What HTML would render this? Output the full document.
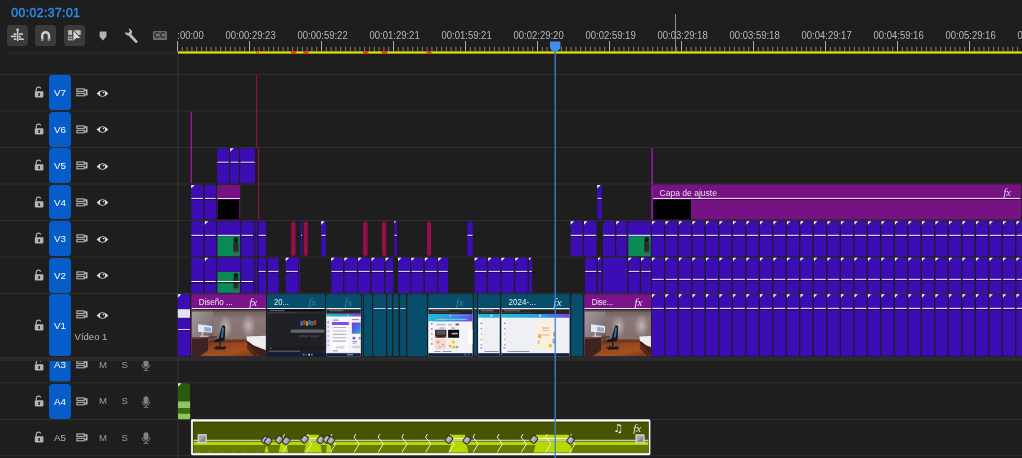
<!DOCTYPE html>
<html lang="es"><head><meta charset="utf-8"><title>Línea de tiempo</title>
<style>
html,body{margin:0;padding:0;background:#1e1e1e;}
body{width:1022px;height:458px;position:relative;overflow:hidden;font-family:"Liberation Sans",sans-serif;}
#app{position:absolute;left:0;top:0;width:1022px;height:458px;will-change:transform;}
.ab{position:absolute;}
.tc{position:absolute;left:11.3px;top:6px;font-size:12.2px;line-height:15px;font-weight:normal;-webkit-text-stroke:0.45px #2d8ceb;color:#2d8ceb;letter-spacing:0.42px;}
.btn{position:absolute;top:25px;width:21px;height:21px;border-radius:3.5px;background:#3b3b3b;}
.btn svg{display:block}
.cc{position:absolute;left:152.5px;top:31.4px;width:14.6px;height:9px;border-radius:1.6px;background:#6c6c6c;color:#1e1e1e;font-size:8.6px;font-weight:bold;line-height:9.6px;text-align:center;letter-spacing:-0.3px;}
.tb{position:absolute;left:49.4px;width:21.2px;border-radius:3.5px;background:#065cc8;color:#fff;font-size:9.8px;text-align:center;}
.tb.nb{background:transparent;color:#b8b8b8;}
.vn{position:absolute;left:74.6px;top:330.9px;font-size:9.5px;line-height:12px;color:#b8b8b8;}
.ms{position:absolute;font-size:9.6px;line-height:12px;color:#9c9c9c;width:8px;text-align:center;}
#cover{position:absolute;left:0;top:357px;width:177px;height:4px;background:#2b2b2b;}
</style></head><body>
<div id="app">
<svg id="tl" width="1022" height="458" viewBox="0 0 1022 458" style="position:absolute;left:0;top:0">
<rect x="7.00" y="52.30" width="171.00" height="1.30" fill="#2b2b2b"/>
<rect x="0.00" y="74.00" width="1022.00" height="1.00" fill="#2f2f2f"/>
<rect x="0.00" y="110.40" width="1022.00" height="1.00" fill="#2f2f2f"/>
<rect x="0.00" y="147.00" width="1022.00" height="1.00" fill="#2f2f2f"/>
<rect x="0.00" y="183.50" width="1022.00" height="1.00" fill="#2f2f2f"/>
<rect x="0.00" y="220.00" width="1022.00" height="1.00" fill="#2f2f2f"/>
<rect x="0.00" y="256.60" width="1022.00" height="1.00" fill="#2f2f2f"/>
<rect x="0.00" y="293.00" width="1022.00" height="1.00" fill="#2f2f2f"/>
<rect x="0.00" y="356.80" width="1022.00" height="4.20" fill="#2b2b2b"/>
<rect x="0.00" y="382.20" width="1022.00" height="1.00" fill="#2f2f2f"/>
<rect x="0.00" y="419.00" width="1022.00" height="1.00" fill="#2f2f2f"/>
<rect x="0.00" y="455.20" width="1022.00" height="1.00" fill="#2f2f2f"/>
<rect x="177.50" y="41.00" width="1.00" height="417.00" fill="#343434"/>
<rect x="256.00" y="75.00" width="1.20" height="72.50" fill="#8a1240"/>
<rect x="258.00" y="148.00" width="1.20" height="71.50" fill="#8a1240"/>
<rect x="190.50" y="111.50" width="1.60" height="71.50" fill="#8a1a9a"/>
<rect x="651.30" y="148.00" width="1.70" height="36.00" fill="#8a1a9a"/>
<rect x="217.10" y="148.20" width="11.90" height="35.10" fill="#3c0cb4" rx="1.5"/>
<rect x="217.40" y="161.70" width="11.30" height="1.2" fill="#d8d0ee"/>
<rect x="217.40" y="162.90" width="11.30" height="0.9" fill="#1a0a50"/>
<rect x="230.20" y="148.20" width="8.70" height="35.10" fill="#3c0cb4" rx="1.5"/>
<rect x="230.50" y="161.70" width="8.10" height="1.2" fill="#d8d0ee"/>
<rect x="230.50" y="162.90" width="8.10" height="0.9" fill="#1a0a50"/>
<path d="M230.20 148.20h3.5l-3.5 3.5z" fill="#f0f0f0"/>
<rect x="240.20" y="148.20" width="14.80" height="35.10" fill="#3c0cb4" rx="1.5"/>
<rect x="240.50" y="161.70" width="14.20" height="1.2" fill="#d8d0ee"/>
<rect x="240.50" y="162.90" width="14.20" height="0.9" fill="#1a0a50"/>
<rect x="191.20" y="185.00" width="12.20" height="34.60" fill="#3c0cb4" rx="1.5"/>
<rect x="191.50" y="197.90" width="11.60" height="1.2" fill="#d8d0ee"/>
<rect x="191.50" y="199.10" width="11.60" height="0.9" fill="#1a0a50"/>
<path d="M191.20 185.00h3.5l-3.5 3.5z" fill="#f0f0f0"/>
<rect x="204.80" y="185.00" width="11.10" height="34.60" fill="#3c0cb4" rx="1.5"/>
<rect x="205.10" y="197.90" width="10.50" height="1.2" fill="#d8d0ee"/>
<rect x="205.10" y="199.10" width="10.50" height="0.9" fill="#1a0a50"/>
<rect x="217.10" y="185.00" width="23.10" height="34.60" fill="#771285" rx="1.5"/>
<rect x="217.40" y="198.00" width="22.60" height="1.2" fill="#e8d8f0"/>
<rect x="217.40" y="199.20" width="22.60" height="0.9" fill="#300838"/>
<rect x="217.60" y="199.60" width="21.60" height="19.80" fill="#000"/>
<rect x="597.20" y="185.00" width="4.60" height="34.60" fill="#3c0cb4" rx="1.5"/>
<rect x="597.50" y="197.90" width="4.00" height="1.2" fill="#d8d0ee"/>
<rect x="597.50" y="199.10" width="4.00" height="0.9" fill="#1a0a50"/>
<path d="M597.20 185.00h3.5l-3.5 3.5z" fill="#f0f0f0"/>
<rect x="651.30" y="184.60" width="370.00" height="35.00" fill="#771285" rx="1.5"/>
<rect x="651.30" y="184.60" width="1.80" height="35.00" fill="#8a1a9a"/>
<rect x="653.20" y="197.90" width="367.00" height="1.10" fill="#e6d4ee"/>
<rect x="653.20" y="199.00" width="367.00" height="0.80" fill="#3a0840"/>
<rect x="653.20" y="199.70" width="37.80" height="19.80" fill="#000"/>
<text x="659.6" y="195.6" font-family="Liberation Sans, sans-serif" font-size="9.6" fill="#e8dcee" textLength="57.4" lengthAdjust="spacingAndGlyphs">Capa de ajuste</text>
<text x="1003.5" y="195.8" font-family="Liberation Serif, serif" font-style="italic" font-size="10" fill="#e8dcee">fx</text>
<rect x="191.20" y="221.20" width="12.40" height="35.10" fill="#3c0cb4" rx="1.5"/>
<rect x="191.50" y="234.80" width="11.80" height="1.2" fill="#d8d0ee"/>
<rect x="191.50" y="236.00" width="11.80" height="0.9" fill="#1a0a50"/>
<rect x="204.80" y="221.20" width="11.10" height="35.10" fill="#3c0cb4" rx="1.5"/>
<rect x="205.10" y="234.80" width="10.50" height="1.2" fill="#d8d0ee"/>
<rect x="205.10" y="236.00" width="10.50" height="0.9" fill="#1a0a50"/>
<path d="M204.80 221.20h3.5l-3.5 3.5z" fill="#f0f0f0"/>
<rect x="217.10" y="221.20" width="23.10" height="35.10" fill="#3c0cb4" rx="1.5"/>
<rect x="217.40" y="234.80" width="22.50" height="1.2" fill="#d8d0ee"/>
<rect x="217.40" y="236.00" width="22.50" height="0.9" fill="#1a0a50"/>
<rect x="217.60" y="236.20" width="22.20" height="20.00" fill="#0a8a56"/>
<ellipse cx="235.9" cy="239.7" rx="2.3" ry="2.6" fill="#141414"/>
<rect x="233.3" y="241.7" width="5.2" height="11.0" fill="#2a2a2c" rx="1"/>
<rect x="233.7" y="251.2" width="1.6" height="4.6" fill="#5a5a5e"/>
<rect x="236.5" y="251.2" width="1.6" height="4.6" fill="#5a5a5e"/>
<rect x="241.20" y="221.20" width="12.10" height="35.10" fill="#3c0cb4" rx="1.5"/>
<rect x="241.50" y="234.80" width="11.50" height="1.2" fill="#d8d0ee"/>
<rect x="241.50" y="236.00" width="11.50" height="0.9" fill="#1a0a50"/>
<rect x="254.10" y="221.20" width="1.20" height="35.10" fill="#3c0cb4" rx="0.5"/>
<rect x="255.90" y="221.20" width="1.10" height="35.10" fill="#3c0cb4" rx="0.5"/>
<rect x="258.40" y="221.20" width="7.70" height="35.10" fill="#3c0cb4" rx="1.5"/>
<rect x="258.70" y="234.80" width="7.10" height="1.2" fill="#d8d0ee"/>
<rect x="258.70" y="236.00" width="7.10" height="0.9" fill="#1a0a50"/>
<rect x="291.10" y="221.60" width="4.40" height="34.50" fill="#960f46" rx="2"/>
<rect x="303.70" y="221.60" width="4.00" height="34.50" fill="#960f46" rx="2"/>
<rect x="363.10" y="221.60" width="4.50" height="34.50" fill="#960f46" rx="2"/>
<rect x="382.00" y="221.60" width="4.20" height="34.50" fill="#960f46" rx="2"/>
<rect x="427.10" y="221.60" width="4.00" height="34.50" fill="#960f46" rx="2"/>
<rect x="300.70" y="221.20" width="1.50" height="35.10" fill="#3c0cb4" rx="0.5"/>
<rect x="301.00" y="234.80" width="0.90" height="1.2" fill="#d8d0ee"/>
<rect x="301.00" y="236.00" width="0.90" height="0.9" fill="#1a0a50"/>
<rect x="321.20" y="221.20" width="4.70" height="35.10" fill="#3c0cb4" rx="1.5"/>
<rect x="321.50" y="234.80" width="4.10" height="1.2" fill="#d8d0ee"/>
<rect x="321.50" y="236.00" width="4.10" height="0.9" fill="#1a0a50"/>
<path d="M321.20 221.20h3.5l-3.5 3.5z" fill="#f0f0f0"/>
<rect x="394.20" y="221.20" width="2.80" height="35.10" fill="#3c0cb4" rx="1"/>
<rect x="394.50" y="234.80" width="2.20" height="1.2" fill="#d8d0ee"/>
<rect x="394.50" y="236.00" width="2.20" height="0.9" fill="#1a0a50"/>
<path d="M394.20 221.20h2.0000000000000115l-2.0000000000000115 2.0000000000000115z" fill="#f0f0f0"/>
<rect x="467.20" y="221.20" width="5.60" height="35.10" fill="#3c0cb4" rx="2"/>
<rect x="467.50" y="234.80" width="5.00" height="1.2" fill="#d8d0ee"/>
<rect x="467.50" y="236.00" width="5.00" height="0.9" fill="#1a0a50"/>
<rect x="570.60" y="221.20" width="12.20" height="35.10" fill="#3c0cb4" rx="1.5"/>
<rect x="570.90" y="234.80" width="11.60" height="1.2" fill="#d8d0ee"/>
<rect x="570.90" y="236.00" width="11.60" height="0.9" fill="#1a0a50"/>
<path d="M570.60 221.20h3.5l-3.5 3.5z" fill="#f0f0f0"/>
<rect x="584.00" y="221.20" width="12.50" height="35.10" fill="#3c0cb4" rx="1.5"/>
<rect x="584.30" y="234.80" width="11.90" height="1.2" fill="#d8d0ee"/>
<rect x="584.30" y="236.00" width="11.90" height="0.9" fill="#1a0a50"/>
<path d="M584.00 221.20h3.5l-3.5 3.5z" fill="#f0f0f0"/>
<rect x="603.00" y="221.20" width="12.00" height="35.10" fill="#3c0cb4" rx="1.5"/>
<rect x="603.30" y="234.80" width="11.40" height="1.2" fill="#d8d0ee"/>
<rect x="603.30" y="236.00" width="11.40" height="0.9" fill="#1a0a50"/>
<rect x="616.20" y="221.20" width="10.60" height="35.10" fill="#3c0cb4" rx="1.5"/>
<rect x="616.50" y="234.80" width="10.00" height="1.2" fill="#d8d0ee"/>
<rect x="616.50" y="236.00" width="10.00" height="0.9" fill="#1a0a50"/>
<path d="M616.20 221.20h3.5l-3.5 3.5z" fill="#f0f0f0"/>
<rect x="628.00" y="221.20" width="23.00" height="35.10" fill="#3c0cb4" rx="1.5"/>
<rect x="628.30" y="234.80" width="22.40" height="1.2" fill="#d8d0ee"/>
<rect x="628.30" y="236.00" width="22.40" height="0.9" fill="#1a0a50"/>
<rect x="628.40" y="236.20" width="22.20" height="20.00" fill="#0a8a56"/>
<ellipse cx="646.7" cy="239.7" rx="2.3" ry="2.6" fill="#141414"/>
<rect x="644.1" y="241.7" width="5.2" height="11.0" fill="#2a2a2c" rx="1"/>
<rect x="644.5" y="251.2" width="1.6" height="4.6" fill="#5a5a5e"/>
<rect x="647.3" y="251.2" width="1.6" height="4.6" fill="#5a5a5e"/>
<rect x="191.20" y="257.80" width="12.40" height="35.10" fill="#3c0cb4" rx="1.5"/>
<rect x="204.80" y="257.80" width="11.10" height="35.10" fill="#3c0cb4" rx="1.5"/>
<path d="M204.80 257.80h3.5l-3.5 3.5z" fill="#f0f0f0"/>
<rect x="217.10" y="257.80" width="23.10" height="35.10" fill="#3c0cb4" rx="1.5"/>
<rect x="217.60" y="272.00" width="22.20" height="20.70" fill="#0a8a56"/>
<ellipse cx="235.9" cy="275.5" rx="2.3" ry="2.6" fill="#141414"/>
<rect x="233.3" y="277.5" width="5.2" height="11.7" fill="#2a2a2c" rx="1"/>
<rect x="233.7" y="287.7" width="1.6" height="4.6" fill="#5a5a5e"/>
<rect x="236.5" y="287.7" width="1.6" height="4.6" fill="#5a5a5e"/>
<rect x="241.20" y="257.80" width="12.10" height="35.10" fill="#3c0cb4" rx="1.5"/>
<rect x="191.50" y="281.00" width="11.80" height="1.2" fill="#ffffff"/>
<rect x="191.50" y="282.20" width="11.80" height="0.9" fill="#050505"/>
<rect x="205.10" y="281.00" width="10.50" height="1.2" fill="#ffffff"/>
<rect x="205.10" y="282.20" width="10.50" height="0.9" fill="#050505"/>
<rect x="217.40" y="281.00" width="22.60" height="1.2" fill="#ffffff"/>
<rect x="217.40" y="282.20" width="22.60" height="0.9" fill="#050505"/>
<rect x="241.50" y="281.00" width="11.50" height="1.2" fill="#ffffff"/>
<rect x="241.50" y="282.20" width="11.50" height="0.9" fill="#050505"/>
<rect x="254.10" y="257.80" width="1.20" height="35.10" fill="#3c0cb4" rx="0.5"/>
<rect x="255.90" y="257.80" width="1.10" height="35.10" fill="#3c0cb4" rx="0.5"/>
<rect x="258.40" y="257.80" width="7.70" height="35.10" fill="#3c0cb4" rx="1.5"/>
<rect x="258.70" y="270.90" width="7.10" height="1.2" fill="#d8d0ee"/>
<rect x="258.70" y="272.10" width="7.10" height="0.9" fill="#1a0a50"/>
<rect x="267.90" y="257.80" width="10.80" height="35.10" fill="#3c0cb4" rx="1.5"/>
<rect x="268.20" y="270.90" width="10.20" height="1.2" fill="#d8d0ee"/>
<rect x="268.20" y="272.10" width="10.20" height="0.9" fill="#1a0a50"/>
<rect x="285.70" y="257.80" width="12.40" height="35.10" fill="#3c0cb4" rx="1.5"/>
<rect x="286.00" y="270.90" width="11.80" height="1.2" fill="#d8d0ee"/>
<rect x="286.00" y="272.10" width="11.80" height="0.9" fill="#1a0a50"/>
<path d="M285.70 257.80h3.5l-3.5 3.5z" fill="#f0f0f0"/>
<rect x="299.00" y="257.80" width="1.00" height="35.10" fill="#3c0cb4" rx="0.5"/>
<rect x="331.20" y="257.80" width="11.90" height="35.10" fill="#3c0cb4" rx="1.5"/>
<rect x="331.50" y="270.90" width="11.30" height="1.2" fill="#d8d0ee"/>
<rect x="331.50" y="272.10" width="11.30" height="0.9" fill="#1a0a50"/>
<path d="M331.20 257.80h3.5l-3.5 3.5z" fill="#f0f0f0"/>
<rect x="344.40" y="257.80" width="12.60" height="35.10" fill="#3c0cb4" rx="1.5"/>
<rect x="344.70" y="270.90" width="12.00" height="1.2" fill="#d8d0ee"/>
<rect x="344.70" y="272.10" width="12.00" height="0.9" fill="#1a0a50"/>
<path d="M344.40 257.80h3.5l-3.5 3.5z" fill="#f0f0f0"/>
<rect x="358.10" y="257.80" width="12.00" height="35.10" fill="#3c0cb4" rx="1.5"/>
<rect x="358.40" y="270.90" width="11.40" height="1.2" fill="#d8d0ee"/>
<rect x="358.40" y="272.10" width="11.40" height="0.9" fill="#1a0a50"/>
<path d="M358.10 257.80h3.5l-3.5 3.5z" fill="#f0f0f0"/>
<rect x="371.50" y="257.80" width="12.70" height="35.10" fill="#3c0cb4" rx="1.5"/>
<rect x="371.80" y="270.90" width="12.10" height="1.2" fill="#d8d0ee"/>
<rect x="371.80" y="272.10" width="12.10" height="0.9" fill="#1a0a50"/>
<path d="M371.50 257.80h3.5l-3.5 3.5z" fill="#f0f0f0"/>
<rect x="385.50" y="257.80" width="7.80" height="35.10" fill="#3c0cb4" rx="1.5"/>
<rect x="385.80" y="270.90" width="7.20" height="1.2" fill="#d8d0ee"/>
<rect x="385.80" y="272.10" width="7.20" height="0.9" fill="#1a0a50"/>
<path d="M385.50 257.80h3.5l-3.5 3.5z" fill="#f0f0f0"/>
<rect x="398.00" y="257.80" width="12.30" height="35.10" fill="#3c0cb4" rx="1.5"/>
<rect x="398.30" y="270.90" width="11.70" height="1.2" fill="#d8d0ee"/>
<rect x="398.30" y="272.10" width="11.70" height="0.9" fill="#1a0a50"/>
<path d="M398.00 257.80h3.5l-3.5 3.5z" fill="#f0f0f0"/>
<rect x="411.30" y="257.80" width="12.10" height="35.10" fill="#3c0cb4" rx="1.5"/>
<rect x="411.60" y="270.90" width="11.50" height="1.2" fill="#d8d0ee"/>
<rect x="411.60" y="272.10" width="11.50" height="0.9" fill="#1a0a50"/>
<path d="M411.30 257.80h3.5l-3.5 3.5z" fill="#f0f0f0"/>
<rect x="424.80" y="257.80" width="12.20" height="35.10" fill="#3c0cb4" rx="1.5"/>
<rect x="425.10" y="270.90" width="11.60" height="1.2" fill="#d8d0ee"/>
<rect x="425.10" y="272.10" width="11.60" height="0.9" fill="#1a0a50"/>
<path d="M424.80 257.80h3.5l-3.5 3.5z" fill="#f0f0f0"/>
<rect x="438.20" y="257.80" width="9.80" height="35.10" fill="#3c0cb4" rx="1.5"/>
<rect x="438.50" y="270.90" width="9.20" height="1.2" fill="#d8d0ee"/>
<rect x="438.50" y="272.10" width="9.20" height="0.9" fill="#1a0a50"/>
<path d="M438.20 257.80h3.5l-3.5 3.5z" fill="#f0f0f0"/>
<rect x="474.60" y="257.80" width="12.20" height="35.10" fill="#3c0cb4" rx="1.5"/>
<rect x="474.90" y="270.90" width="11.60" height="1.2" fill="#d8d0ee"/>
<rect x="474.90" y="272.10" width="11.60" height="0.9" fill="#1a0a50"/>
<path d="M474.60 257.80h3.5l-3.5 3.5z" fill="#f0f0f0"/>
<rect x="488.20" y="257.80" width="12.10" height="35.10" fill="#3c0cb4" rx="1.5"/>
<rect x="488.50" y="270.90" width="11.50" height="1.2" fill="#d8d0ee"/>
<rect x="488.50" y="272.10" width="11.50" height="0.9" fill="#1a0a50"/>
<path d="M488.20 257.80h3.5l-3.5 3.5z" fill="#f0f0f0"/>
<rect x="501.40" y="257.80" width="12.50" height="35.10" fill="#3c0cb4" rx="1.5"/>
<rect x="501.70" y="270.90" width="11.90" height="1.2" fill="#d8d0ee"/>
<rect x="501.70" y="272.10" width="11.90" height="0.9" fill="#1a0a50"/>
<path d="M501.40 257.80h3.5l-3.5 3.5z" fill="#f0f0f0"/>
<rect x="515.30" y="257.80" width="12.30" height="35.10" fill="#3c0cb4" rx="1.5"/>
<rect x="515.60" y="270.90" width="11.70" height="1.2" fill="#d8d0ee"/>
<rect x="515.60" y="272.10" width="11.70" height="0.9" fill="#1a0a50"/>
<path d="M515.30 257.80h3.5l-3.5 3.5z" fill="#f0f0f0"/>
<rect x="528.90" y="257.80" width="3.30" height="35.10" fill="#3c0cb4" rx="1.5"/>
<rect x="529.20" y="270.90" width="2.70" height="1.2" fill="#d8d0ee"/>
<rect x="529.20" y="272.10" width="2.70" height="0.9" fill="#1a0a50"/>
<path d="M528.90 257.80h2.5000000000000684l-2.5000000000000684 2.5000000000000684z" fill="#f0f0f0"/>
<rect x="585.00" y="257.80" width="11.70" height="35.10" fill="#3c0cb4" rx="1.5"/>
<rect x="585.30" y="270.90" width="11.10" height="1.2" fill="#d8d0ee"/>
<rect x="585.30" y="272.10" width="11.10" height="0.9" fill="#1a0a50"/>
<rect x="598.00" y="257.80" width="3.50" height="35.10" fill="#3c0cb4" rx="1.5"/>
<rect x="598.30" y="270.90" width="2.90" height="1.2" fill="#d8d0ee"/>
<rect x="598.30" y="272.10" width="2.90" height="0.9" fill="#1a0a50"/>
<path d="M598.00 257.80h2.7l-2.7 2.7z" fill="#f0f0f0"/>
<rect x="603.00" y="257.80" width="24.00" height="35.10" fill="#3c0cb4" rx="1.5"/>
<rect x="628.40" y="257.80" width="11.30" height="35.10" fill="#3c0cb4" rx="1.5"/>
<rect x="628.70" y="270.90" width="10.70" height="1.2" fill="#d8d0ee"/>
<rect x="628.70" y="272.10" width="10.70" height="0.9" fill="#1a0a50"/>
<path d="M628.40 257.80h3.5l-3.5 3.5z" fill="#f0f0f0"/>
<rect x="641.00" y="257.80" width="10.00" height="35.10" fill="#3c0cb4" rx="1.5"/>
<rect x="641.30" y="270.90" width="9.40" height="1.2" fill="#d8d0ee"/>
<rect x="641.30" y="272.10" width="9.40" height="0.9" fill="#1a0a50"/>
<path d="M641.00 257.80h3.5l-3.5 3.5z" fill="#f0f0f0"/>
<rect x="651.90" y="221.20" width="12.20" height="35.10" fill="#3c0cb4" rx="1"/>
<rect x="652.20" y="234.80" width="11.60" height="1.2" fill="#d8d0ee"/>
<rect x="652.20" y="236.00" width="11.60" height="0.9" fill="#1a0a50"/>
<path d="M651.90 221.20h3.5l-3.5 3.5z" fill="#f0f0f0"/>
<rect x="651.90" y="257.80" width="12.20" height="35.10" fill="#3c0cb4" rx="1"/>
<rect x="652.20" y="278.80" width="11.60" height="1.2" fill="#d8d0ee"/>
<rect x="652.20" y="280.00" width="11.60" height="0.9" fill="#1a0a50"/>
<path d="M651.90 257.80h3.5l-3.5 3.5z" fill="#f0f0f0"/>
<rect x="651.90" y="294.20" width="12.20" height="62.10" fill="#3c0cb4" rx="1"/>
<rect x="652.20" y="307.80" width="11.60" height="1.2" fill="#d8d0ee"/>
<rect x="652.20" y="309.00" width="11.60" height="0.9" fill="#1a0a50"/>
<path d="M651.90 294.20h3.5l-3.5 3.5z" fill="#f0f0f0"/>
<rect x="665.40" y="221.20" width="12.20" height="35.10" fill="#3c0cb4" rx="1"/>
<rect x="665.70" y="234.80" width="11.60" height="1.2" fill="#d8d0ee"/>
<rect x="665.70" y="236.00" width="11.60" height="0.9" fill="#1a0a50"/>
<path d="M665.40 221.20h3.5l-3.5 3.5z" fill="#f0f0f0"/>
<rect x="665.40" y="257.80" width="12.20" height="35.10" fill="#3c0cb4" rx="1"/>
<rect x="665.70" y="278.80" width="11.60" height="1.2" fill="#d8d0ee"/>
<rect x="665.70" y="280.00" width="11.60" height="0.9" fill="#1a0a50"/>
<path d="M665.40 257.80h3.5l-3.5 3.5z" fill="#f0f0f0"/>
<rect x="665.40" y="294.20" width="12.20" height="62.10" fill="#3c0cb4" rx="1"/>
<rect x="665.70" y="307.80" width="11.60" height="1.2" fill="#d8d0ee"/>
<rect x="665.70" y="309.00" width="11.60" height="0.9" fill="#1a0a50"/>
<path d="M665.40 294.20h3.5l-3.5 3.5z" fill="#f0f0f0"/>
<rect x="678.90" y="221.20" width="12.20" height="35.10" fill="#3c0cb4" rx="1"/>
<rect x="679.20" y="234.80" width="11.60" height="1.2" fill="#d8d0ee"/>
<rect x="679.20" y="236.00" width="11.60" height="0.9" fill="#1a0a50"/>
<path d="M678.90 221.20h3.5l-3.5 3.5z" fill="#f0f0f0"/>
<rect x="678.90" y="257.80" width="12.20" height="35.10" fill="#3c0cb4" rx="1"/>
<rect x="679.20" y="278.80" width="11.60" height="1.2" fill="#d8d0ee"/>
<rect x="679.20" y="280.00" width="11.60" height="0.9" fill="#1a0a50"/>
<path d="M678.90 257.80h3.5l-3.5 3.5z" fill="#f0f0f0"/>
<rect x="678.90" y="294.20" width="12.20" height="62.10" fill="#3c0cb4" rx="1"/>
<rect x="679.20" y="307.80" width="11.60" height="1.2" fill="#d8d0ee"/>
<rect x="679.20" y="309.00" width="11.60" height="0.9" fill="#1a0a50"/>
<path d="M678.90 294.20h3.5l-3.5 3.5z" fill="#f0f0f0"/>
<rect x="692.40" y="221.20" width="12.20" height="35.10" fill="#3c0cb4" rx="1"/>
<rect x="692.70" y="234.80" width="11.60" height="1.2" fill="#d8d0ee"/>
<rect x="692.70" y="236.00" width="11.60" height="0.9" fill="#1a0a50"/>
<path d="M692.40 221.20h3.5l-3.5 3.5z" fill="#f0f0f0"/>
<rect x="692.40" y="257.80" width="12.20" height="35.10" fill="#3c0cb4" rx="1"/>
<rect x="692.70" y="278.80" width="11.60" height="1.2" fill="#d8d0ee"/>
<rect x="692.70" y="280.00" width="11.60" height="0.9" fill="#1a0a50"/>
<path d="M692.40 257.80h3.5l-3.5 3.5z" fill="#f0f0f0"/>
<rect x="692.40" y="294.20" width="12.20" height="62.10" fill="#3c0cb4" rx="1"/>
<rect x="692.70" y="307.80" width="11.60" height="1.2" fill="#d8d0ee"/>
<rect x="692.70" y="309.00" width="11.60" height="0.9" fill="#1a0a50"/>
<path d="M692.40 294.20h3.5l-3.5 3.5z" fill="#f0f0f0"/>
<rect x="705.90" y="221.20" width="12.20" height="35.10" fill="#3c0cb4" rx="1"/>
<rect x="706.20" y="234.80" width="11.60" height="1.2" fill="#d8d0ee"/>
<rect x="706.20" y="236.00" width="11.60" height="0.9" fill="#1a0a50"/>
<path d="M705.90 221.20h3.5l-3.5 3.5z" fill="#f0f0f0"/>
<rect x="705.90" y="257.80" width="12.20" height="35.10" fill="#3c0cb4" rx="1"/>
<rect x="706.20" y="278.80" width="11.60" height="1.2" fill="#d8d0ee"/>
<rect x="706.20" y="280.00" width="11.60" height="0.9" fill="#1a0a50"/>
<path d="M705.90 257.80h3.5l-3.5 3.5z" fill="#f0f0f0"/>
<rect x="705.90" y="294.20" width="12.20" height="62.10" fill="#3c0cb4" rx="1"/>
<rect x="706.20" y="307.80" width="11.60" height="1.2" fill="#d8d0ee"/>
<rect x="706.20" y="309.00" width="11.60" height="0.9" fill="#1a0a50"/>
<path d="M705.90 294.20h3.5l-3.5 3.5z" fill="#f0f0f0"/>
<rect x="719.40" y="221.20" width="12.20" height="35.10" fill="#3c0cb4" rx="1"/>
<rect x="719.70" y="234.80" width="11.60" height="1.2" fill="#d8d0ee"/>
<rect x="719.70" y="236.00" width="11.60" height="0.9" fill="#1a0a50"/>
<path d="M719.40 221.20h3.5l-3.5 3.5z" fill="#f0f0f0"/>
<rect x="719.40" y="257.80" width="12.20" height="35.10" fill="#3c0cb4" rx="1"/>
<rect x="719.70" y="278.80" width="11.60" height="1.2" fill="#d8d0ee"/>
<rect x="719.70" y="280.00" width="11.60" height="0.9" fill="#1a0a50"/>
<path d="M719.40 257.80h3.5l-3.5 3.5z" fill="#f0f0f0"/>
<rect x="719.40" y="294.20" width="12.20" height="62.10" fill="#3c0cb4" rx="1"/>
<rect x="719.70" y="307.80" width="11.60" height="1.2" fill="#d8d0ee"/>
<rect x="719.70" y="309.00" width="11.60" height="0.9" fill="#1a0a50"/>
<path d="M719.40 294.20h3.5l-3.5 3.5z" fill="#f0f0f0"/>
<rect x="732.90" y="221.20" width="12.20" height="35.10" fill="#3c0cb4" rx="1"/>
<rect x="733.20" y="234.80" width="11.60" height="1.2" fill="#d8d0ee"/>
<rect x="733.20" y="236.00" width="11.60" height="0.9" fill="#1a0a50"/>
<path d="M732.90 221.20h3.5l-3.5 3.5z" fill="#f0f0f0"/>
<rect x="732.90" y="257.80" width="12.20" height="35.10" fill="#3c0cb4" rx="1"/>
<rect x="733.20" y="278.80" width="11.60" height="1.2" fill="#d8d0ee"/>
<rect x="733.20" y="280.00" width="11.60" height="0.9" fill="#1a0a50"/>
<path d="M732.90 257.80h3.5l-3.5 3.5z" fill="#f0f0f0"/>
<rect x="732.90" y="294.20" width="12.20" height="62.10" fill="#3c0cb4" rx="1"/>
<rect x="733.20" y="307.80" width="11.60" height="1.2" fill="#d8d0ee"/>
<rect x="733.20" y="309.00" width="11.60" height="0.9" fill="#1a0a50"/>
<path d="M732.90 294.20h3.5l-3.5 3.5z" fill="#f0f0f0"/>
<rect x="746.40" y="221.20" width="12.20" height="35.10" fill="#3c0cb4" rx="1"/>
<rect x="746.70" y="234.80" width="11.60" height="1.2" fill="#d8d0ee"/>
<rect x="746.70" y="236.00" width="11.60" height="0.9" fill="#1a0a50"/>
<path d="M746.40 221.20h3.5l-3.5 3.5z" fill="#f0f0f0"/>
<rect x="746.40" y="257.80" width="12.20" height="35.10" fill="#3c0cb4" rx="1"/>
<rect x="746.70" y="278.80" width="11.60" height="1.2" fill="#d8d0ee"/>
<rect x="746.70" y="280.00" width="11.60" height="0.9" fill="#1a0a50"/>
<path d="M746.40 257.80h3.5l-3.5 3.5z" fill="#f0f0f0"/>
<rect x="746.40" y="294.20" width="12.20" height="62.10" fill="#3c0cb4" rx="1"/>
<rect x="746.70" y="307.80" width="11.60" height="1.2" fill="#d8d0ee"/>
<rect x="746.70" y="309.00" width="11.60" height="0.9" fill="#1a0a50"/>
<path d="M746.40 294.20h3.5l-3.5 3.5z" fill="#f0f0f0"/>
<rect x="759.90" y="221.20" width="12.20" height="35.10" fill="#3c0cb4" rx="1"/>
<rect x="760.20" y="234.80" width="11.60" height="1.2" fill="#d8d0ee"/>
<rect x="760.20" y="236.00" width="11.60" height="0.9" fill="#1a0a50"/>
<path d="M759.90 221.20h3.5l-3.5 3.5z" fill="#f0f0f0"/>
<rect x="759.90" y="257.80" width="12.20" height="35.10" fill="#3c0cb4" rx="1"/>
<rect x="760.20" y="278.80" width="11.60" height="1.2" fill="#d8d0ee"/>
<rect x="760.20" y="280.00" width="11.60" height="0.9" fill="#1a0a50"/>
<path d="M759.90 257.80h3.5l-3.5 3.5z" fill="#f0f0f0"/>
<rect x="759.90" y="294.20" width="12.20" height="62.10" fill="#3c0cb4" rx="1"/>
<rect x="760.20" y="307.80" width="11.60" height="1.2" fill="#d8d0ee"/>
<rect x="760.20" y="309.00" width="11.60" height="0.9" fill="#1a0a50"/>
<path d="M759.90 294.20h3.5l-3.5 3.5z" fill="#f0f0f0"/>
<rect x="773.40" y="221.20" width="12.20" height="35.10" fill="#3c0cb4" rx="1"/>
<rect x="773.70" y="234.80" width="11.60" height="1.2" fill="#d8d0ee"/>
<rect x="773.70" y="236.00" width="11.60" height="0.9" fill="#1a0a50"/>
<path d="M773.40 221.20h3.5l-3.5 3.5z" fill="#f0f0f0"/>
<rect x="773.40" y="257.80" width="12.20" height="35.10" fill="#3c0cb4" rx="1"/>
<rect x="773.70" y="278.80" width="11.60" height="1.2" fill="#d8d0ee"/>
<rect x="773.70" y="280.00" width="11.60" height="0.9" fill="#1a0a50"/>
<path d="M773.40 257.80h3.5l-3.5 3.5z" fill="#f0f0f0"/>
<rect x="773.40" y="294.20" width="12.20" height="62.10" fill="#3c0cb4" rx="1"/>
<rect x="773.70" y="307.80" width="11.60" height="1.2" fill="#d8d0ee"/>
<rect x="773.70" y="309.00" width="11.60" height="0.9" fill="#1a0a50"/>
<path d="M773.40 294.20h3.5l-3.5 3.5z" fill="#f0f0f0"/>
<rect x="786.90" y="221.20" width="12.20" height="35.10" fill="#3c0cb4" rx="1"/>
<rect x="787.20" y="234.80" width="11.60" height="1.2" fill="#d8d0ee"/>
<rect x="787.20" y="236.00" width="11.60" height="0.9" fill="#1a0a50"/>
<path d="M786.90 221.20h3.5l-3.5 3.5z" fill="#f0f0f0"/>
<rect x="786.90" y="257.80" width="12.20" height="35.10" fill="#3c0cb4" rx="1"/>
<rect x="787.20" y="278.80" width="11.60" height="1.2" fill="#d8d0ee"/>
<rect x="787.20" y="280.00" width="11.60" height="0.9" fill="#1a0a50"/>
<path d="M786.90 257.80h3.5l-3.5 3.5z" fill="#f0f0f0"/>
<rect x="786.90" y="294.20" width="12.20" height="62.10" fill="#3c0cb4" rx="1"/>
<rect x="787.20" y="307.80" width="11.60" height="1.2" fill="#d8d0ee"/>
<rect x="787.20" y="309.00" width="11.60" height="0.9" fill="#1a0a50"/>
<path d="M786.90 294.20h3.5l-3.5 3.5z" fill="#f0f0f0"/>
<rect x="800.40" y="221.20" width="12.20" height="35.10" fill="#3c0cb4" rx="1"/>
<rect x="800.70" y="234.80" width="11.60" height="1.2" fill="#d8d0ee"/>
<rect x="800.70" y="236.00" width="11.60" height="0.9" fill="#1a0a50"/>
<path d="M800.40 221.20h3.5l-3.5 3.5z" fill="#f0f0f0"/>
<rect x="800.40" y="257.80" width="12.20" height="35.10" fill="#3c0cb4" rx="1"/>
<rect x="800.70" y="278.80" width="11.60" height="1.2" fill="#d8d0ee"/>
<rect x="800.70" y="280.00" width="11.60" height="0.9" fill="#1a0a50"/>
<path d="M800.40 257.80h3.5l-3.5 3.5z" fill="#f0f0f0"/>
<rect x="800.40" y="294.20" width="12.20" height="62.10" fill="#3c0cb4" rx="1"/>
<rect x="800.70" y="307.80" width="11.60" height="1.2" fill="#d8d0ee"/>
<rect x="800.70" y="309.00" width="11.60" height="0.9" fill="#1a0a50"/>
<path d="M800.40 294.20h3.5l-3.5 3.5z" fill="#f0f0f0"/>
<rect x="813.90" y="221.20" width="12.20" height="35.10" fill="#3c0cb4" rx="1"/>
<rect x="814.20" y="234.80" width="11.60" height="1.2" fill="#d8d0ee"/>
<rect x="814.20" y="236.00" width="11.60" height="0.9" fill="#1a0a50"/>
<path d="M813.90 221.20h3.5l-3.5 3.5z" fill="#f0f0f0"/>
<rect x="813.90" y="257.80" width="12.20" height="35.10" fill="#3c0cb4" rx="1"/>
<rect x="814.20" y="278.80" width="11.60" height="1.2" fill="#d8d0ee"/>
<rect x="814.20" y="280.00" width="11.60" height="0.9" fill="#1a0a50"/>
<path d="M813.90 257.80h3.5l-3.5 3.5z" fill="#f0f0f0"/>
<rect x="813.90" y="294.20" width="12.20" height="62.10" fill="#3c0cb4" rx="1"/>
<rect x="814.20" y="307.80" width="11.60" height="1.2" fill="#d8d0ee"/>
<rect x="814.20" y="309.00" width="11.60" height="0.9" fill="#1a0a50"/>
<path d="M813.90 294.20h3.5l-3.5 3.5z" fill="#f0f0f0"/>
<rect x="827.40" y="221.20" width="12.20" height="35.10" fill="#3c0cb4" rx="1"/>
<rect x="827.70" y="234.80" width="11.60" height="1.2" fill="#d8d0ee"/>
<rect x="827.70" y="236.00" width="11.60" height="0.9" fill="#1a0a50"/>
<path d="M827.40 221.20h3.5l-3.5 3.5z" fill="#f0f0f0"/>
<rect x="827.40" y="257.80" width="12.20" height="35.10" fill="#3c0cb4" rx="1"/>
<rect x="827.70" y="278.80" width="11.60" height="1.2" fill="#d8d0ee"/>
<rect x="827.70" y="280.00" width="11.60" height="0.9" fill="#1a0a50"/>
<path d="M827.40 257.80h3.5l-3.5 3.5z" fill="#f0f0f0"/>
<rect x="827.40" y="294.20" width="12.20" height="62.10" fill="#3c0cb4" rx="1"/>
<rect x="827.70" y="307.80" width="11.60" height="1.2" fill="#d8d0ee"/>
<rect x="827.70" y="309.00" width="11.60" height="0.9" fill="#1a0a50"/>
<path d="M827.40 294.20h3.5l-3.5 3.5z" fill="#f0f0f0"/>
<rect x="840.90" y="221.20" width="12.20" height="35.10" fill="#3c0cb4" rx="1"/>
<rect x="841.20" y="234.80" width="11.60" height="1.2" fill="#d8d0ee"/>
<rect x="841.20" y="236.00" width="11.60" height="0.9" fill="#1a0a50"/>
<path d="M840.90 221.20h3.5l-3.5 3.5z" fill="#f0f0f0"/>
<rect x="840.90" y="257.80" width="12.20" height="35.10" fill="#3c0cb4" rx="1"/>
<rect x="841.20" y="278.80" width="11.60" height="1.2" fill="#d8d0ee"/>
<rect x="841.20" y="280.00" width="11.60" height="0.9" fill="#1a0a50"/>
<path d="M840.90 257.80h3.5l-3.5 3.5z" fill="#f0f0f0"/>
<rect x="840.90" y="294.20" width="12.20" height="62.10" fill="#3c0cb4" rx="1"/>
<rect x="841.20" y="307.80" width="11.60" height="1.2" fill="#d8d0ee"/>
<rect x="841.20" y="309.00" width="11.60" height="0.9" fill="#1a0a50"/>
<path d="M840.90 294.20h3.5l-3.5 3.5z" fill="#f0f0f0"/>
<rect x="854.40" y="221.20" width="12.20" height="35.10" fill="#3c0cb4" rx="1"/>
<rect x="854.70" y="234.80" width="11.60" height="1.2" fill="#d8d0ee"/>
<rect x="854.70" y="236.00" width="11.60" height="0.9" fill="#1a0a50"/>
<path d="M854.40 221.20h3.5l-3.5 3.5z" fill="#f0f0f0"/>
<rect x="854.40" y="257.80" width="12.20" height="35.10" fill="#3c0cb4" rx="1"/>
<rect x="854.70" y="278.80" width="11.60" height="1.2" fill="#d8d0ee"/>
<rect x="854.70" y="280.00" width="11.60" height="0.9" fill="#1a0a50"/>
<path d="M854.40 257.80h3.5l-3.5 3.5z" fill="#f0f0f0"/>
<rect x="854.40" y="294.20" width="12.20" height="62.10" fill="#3c0cb4" rx="1"/>
<rect x="854.70" y="307.80" width="11.60" height="1.2" fill="#d8d0ee"/>
<rect x="854.70" y="309.00" width="11.60" height="0.9" fill="#1a0a50"/>
<path d="M854.40 294.20h3.5l-3.5 3.5z" fill="#f0f0f0"/>
<rect x="867.90" y="221.20" width="12.20" height="35.10" fill="#3c0cb4" rx="1"/>
<rect x="868.20" y="234.80" width="11.60" height="1.2" fill="#d8d0ee"/>
<rect x="868.20" y="236.00" width="11.60" height="0.9" fill="#1a0a50"/>
<path d="M867.90 221.20h3.5l-3.5 3.5z" fill="#f0f0f0"/>
<rect x="867.90" y="257.80" width="12.20" height="35.10" fill="#3c0cb4" rx="1"/>
<rect x="868.20" y="278.80" width="11.60" height="1.2" fill="#d8d0ee"/>
<rect x="868.20" y="280.00" width="11.60" height="0.9" fill="#1a0a50"/>
<path d="M867.90 257.80h3.5l-3.5 3.5z" fill="#f0f0f0"/>
<rect x="867.90" y="294.20" width="12.20" height="62.10" fill="#3c0cb4" rx="1"/>
<rect x="868.20" y="307.80" width="11.60" height="1.2" fill="#d8d0ee"/>
<rect x="868.20" y="309.00" width="11.60" height="0.9" fill="#1a0a50"/>
<path d="M867.90 294.20h3.5l-3.5 3.5z" fill="#f0f0f0"/>
<rect x="881.40" y="221.20" width="12.20" height="35.10" fill="#3c0cb4" rx="1"/>
<rect x="881.70" y="234.80" width="11.60" height="1.2" fill="#d8d0ee"/>
<rect x="881.70" y="236.00" width="11.60" height="0.9" fill="#1a0a50"/>
<path d="M881.40 221.20h3.5l-3.5 3.5z" fill="#f0f0f0"/>
<rect x="881.40" y="257.80" width="12.20" height="35.10" fill="#3c0cb4" rx="1"/>
<rect x="881.70" y="278.80" width="11.60" height="1.2" fill="#d8d0ee"/>
<rect x="881.70" y="280.00" width="11.60" height="0.9" fill="#1a0a50"/>
<path d="M881.40 257.80h3.5l-3.5 3.5z" fill="#f0f0f0"/>
<rect x="881.40" y="294.20" width="12.20" height="62.10" fill="#3c0cb4" rx="1"/>
<rect x="881.70" y="307.80" width="11.60" height="1.2" fill="#d8d0ee"/>
<rect x="881.70" y="309.00" width="11.60" height="0.9" fill="#1a0a50"/>
<path d="M881.40 294.20h3.5l-3.5 3.5z" fill="#f0f0f0"/>
<rect x="894.90" y="221.20" width="12.20" height="35.10" fill="#3c0cb4" rx="1"/>
<rect x="895.20" y="234.80" width="11.60" height="1.2" fill="#d8d0ee"/>
<rect x="895.20" y="236.00" width="11.60" height="0.9" fill="#1a0a50"/>
<path d="M894.90 221.20h3.5l-3.5 3.5z" fill="#f0f0f0"/>
<rect x="894.90" y="257.80" width="12.20" height="35.10" fill="#3c0cb4" rx="1"/>
<rect x="895.20" y="278.80" width="11.60" height="1.2" fill="#d8d0ee"/>
<rect x="895.20" y="280.00" width="11.60" height="0.9" fill="#1a0a50"/>
<path d="M894.90 257.80h3.5l-3.5 3.5z" fill="#f0f0f0"/>
<rect x="894.90" y="294.20" width="12.20" height="62.10" fill="#3c0cb4" rx="1"/>
<rect x="895.20" y="307.80" width="11.60" height="1.2" fill="#d8d0ee"/>
<rect x="895.20" y="309.00" width="11.60" height="0.9" fill="#1a0a50"/>
<path d="M894.90 294.20h3.5l-3.5 3.5z" fill="#f0f0f0"/>
<rect x="908.40" y="221.20" width="12.20" height="35.10" fill="#3c0cb4" rx="1"/>
<rect x="908.70" y="234.80" width="11.60" height="1.2" fill="#d8d0ee"/>
<rect x="908.70" y="236.00" width="11.60" height="0.9" fill="#1a0a50"/>
<path d="M908.40 221.20h3.5l-3.5 3.5z" fill="#f0f0f0"/>
<rect x="908.40" y="257.80" width="12.20" height="35.10" fill="#3c0cb4" rx="1"/>
<rect x="908.70" y="278.80" width="11.60" height="1.2" fill="#d8d0ee"/>
<rect x="908.70" y="280.00" width="11.60" height="0.9" fill="#1a0a50"/>
<path d="M908.40 257.80h3.5l-3.5 3.5z" fill="#f0f0f0"/>
<rect x="908.40" y="294.20" width="12.20" height="62.10" fill="#3c0cb4" rx="1"/>
<rect x="908.70" y="307.80" width="11.60" height="1.2" fill="#d8d0ee"/>
<rect x="908.70" y="309.00" width="11.60" height="0.9" fill="#1a0a50"/>
<path d="M908.40 294.20h3.5l-3.5 3.5z" fill="#f0f0f0"/>
<rect x="921.90" y="221.20" width="12.20" height="35.10" fill="#3c0cb4" rx="1"/>
<rect x="922.20" y="234.80" width="11.60" height="1.2" fill="#d8d0ee"/>
<rect x="922.20" y="236.00" width="11.60" height="0.9" fill="#1a0a50"/>
<path d="M921.90 221.20h3.5l-3.5 3.5z" fill="#f0f0f0"/>
<rect x="921.90" y="257.80" width="12.20" height="35.10" fill="#3c0cb4" rx="1"/>
<rect x="922.20" y="278.80" width="11.60" height="1.2" fill="#d8d0ee"/>
<rect x="922.20" y="280.00" width="11.60" height="0.9" fill="#1a0a50"/>
<path d="M921.90 257.80h3.5l-3.5 3.5z" fill="#f0f0f0"/>
<rect x="921.90" y="294.20" width="12.20" height="62.10" fill="#3c0cb4" rx="1"/>
<rect x="922.20" y="307.80" width="11.60" height="1.2" fill="#d8d0ee"/>
<rect x="922.20" y="309.00" width="11.60" height="0.9" fill="#1a0a50"/>
<path d="M921.90 294.20h3.5l-3.5 3.5z" fill="#f0f0f0"/>
<rect x="935.40" y="221.20" width="12.20" height="35.10" fill="#3c0cb4" rx="1"/>
<rect x="935.70" y="234.80" width="11.60" height="1.2" fill="#d8d0ee"/>
<rect x="935.70" y="236.00" width="11.60" height="0.9" fill="#1a0a50"/>
<path d="M935.40 221.20h3.5l-3.5 3.5z" fill="#f0f0f0"/>
<rect x="935.40" y="257.80" width="12.20" height="35.10" fill="#3c0cb4" rx="1"/>
<rect x="935.70" y="278.80" width="11.60" height="1.2" fill="#d8d0ee"/>
<rect x="935.70" y="280.00" width="11.60" height="0.9" fill="#1a0a50"/>
<path d="M935.40 257.80h3.5l-3.5 3.5z" fill="#f0f0f0"/>
<rect x="935.40" y="294.20" width="12.20" height="62.10" fill="#3c0cb4" rx="1"/>
<rect x="935.70" y="307.80" width="11.60" height="1.2" fill="#d8d0ee"/>
<rect x="935.70" y="309.00" width="11.60" height="0.9" fill="#1a0a50"/>
<path d="M935.40 294.20h3.5l-3.5 3.5z" fill="#f0f0f0"/>
<rect x="948.90" y="221.20" width="12.20" height="35.10" fill="#3c0cb4" rx="1"/>
<rect x="949.20" y="234.80" width="11.60" height="1.2" fill="#d8d0ee"/>
<rect x="949.20" y="236.00" width="11.60" height="0.9" fill="#1a0a50"/>
<path d="M948.90 221.20h3.5l-3.5 3.5z" fill="#f0f0f0"/>
<rect x="948.90" y="257.80" width="12.20" height="35.10" fill="#3c0cb4" rx="1"/>
<rect x="949.20" y="278.80" width="11.60" height="1.2" fill="#d8d0ee"/>
<rect x="949.20" y="280.00" width="11.60" height="0.9" fill="#1a0a50"/>
<path d="M948.90 257.80h3.5l-3.5 3.5z" fill="#f0f0f0"/>
<rect x="948.90" y="294.20" width="12.20" height="62.10" fill="#3c0cb4" rx="1"/>
<rect x="949.20" y="307.80" width="11.60" height="1.2" fill="#d8d0ee"/>
<rect x="949.20" y="309.00" width="11.60" height="0.9" fill="#1a0a50"/>
<path d="M948.90 294.20h3.5l-3.5 3.5z" fill="#f0f0f0"/>
<rect x="962.40" y="221.20" width="12.20" height="35.10" fill="#3c0cb4" rx="1"/>
<rect x="962.70" y="234.80" width="11.60" height="1.2" fill="#d8d0ee"/>
<rect x="962.70" y="236.00" width="11.60" height="0.9" fill="#1a0a50"/>
<path d="M962.40 221.20h3.5l-3.5 3.5z" fill="#f0f0f0"/>
<rect x="962.40" y="257.80" width="12.20" height="35.10" fill="#3c0cb4" rx="1"/>
<rect x="962.70" y="278.80" width="11.60" height="1.2" fill="#d8d0ee"/>
<rect x="962.70" y="280.00" width="11.60" height="0.9" fill="#1a0a50"/>
<path d="M962.40 257.80h3.5l-3.5 3.5z" fill="#f0f0f0"/>
<rect x="962.40" y="294.20" width="12.20" height="62.10" fill="#3c0cb4" rx="1"/>
<rect x="962.70" y="307.80" width="11.60" height="1.2" fill="#d8d0ee"/>
<rect x="962.70" y="309.00" width="11.60" height="0.9" fill="#1a0a50"/>
<path d="M962.40 294.20h3.5l-3.5 3.5z" fill="#f0f0f0"/>
<rect x="975.90" y="221.20" width="12.20" height="35.10" fill="#3c0cb4" rx="1"/>
<rect x="976.20" y="234.80" width="11.60" height="1.2" fill="#d8d0ee"/>
<rect x="976.20" y="236.00" width="11.60" height="0.9" fill="#1a0a50"/>
<path d="M975.90 221.20h3.5l-3.5 3.5z" fill="#f0f0f0"/>
<rect x="975.90" y="257.80" width="12.20" height="35.10" fill="#3c0cb4" rx="1"/>
<rect x="976.20" y="278.80" width="11.60" height="1.2" fill="#d8d0ee"/>
<rect x="976.20" y="280.00" width="11.60" height="0.9" fill="#1a0a50"/>
<path d="M975.90 257.80h3.5l-3.5 3.5z" fill="#f0f0f0"/>
<rect x="975.90" y="294.20" width="12.20" height="62.10" fill="#3c0cb4" rx="1"/>
<rect x="976.20" y="307.80" width="11.60" height="1.2" fill="#d8d0ee"/>
<rect x="976.20" y="309.00" width="11.60" height="0.9" fill="#1a0a50"/>
<path d="M975.90 294.20h3.5l-3.5 3.5z" fill="#f0f0f0"/>
<rect x="989.40" y="221.20" width="12.20" height="35.10" fill="#3c0cb4" rx="1"/>
<rect x="989.70" y="234.80" width="11.60" height="1.2" fill="#d8d0ee"/>
<rect x="989.70" y="236.00" width="11.60" height="0.9" fill="#1a0a50"/>
<path d="M989.40 221.20h3.5l-3.5 3.5z" fill="#f0f0f0"/>
<rect x="989.40" y="257.80" width="12.20" height="35.10" fill="#3c0cb4" rx="1"/>
<rect x="989.70" y="278.80" width="11.60" height="1.2" fill="#d8d0ee"/>
<rect x="989.70" y="280.00" width="11.60" height="0.9" fill="#1a0a50"/>
<path d="M989.40 257.80h3.5l-3.5 3.5z" fill="#f0f0f0"/>
<rect x="989.40" y="294.20" width="12.20" height="62.10" fill="#3c0cb4" rx="1"/>
<rect x="989.70" y="307.80" width="11.60" height="1.2" fill="#d8d0ee"/>
<rect x="989.70" y="309.00" width="11.60" height="0.9" fill="#1a0a50"/>
<path d="M989.40 294.20h3.5l-3.5 3.5z" fill="#f0f0f0"/>
<rect x="1002.90" y="221.20" width="12.20" height="35.10" fill="#3c0cb4" rx="1"/>
<rect x="1003.20" y="234.80" width="11.60" height="1.2" fill="#d8d0ee"/>
<rect x="1003.20" y="236.00" width="11.60" height="0.9" fill="#1a0a50"/>
<path d="M1002.90 221.20h3.5l-3.5 3.5z" fill="#f0f0f0"/>
<rect x="1002.90" y="257.80" width="12.20" height="35.10" fill="#3c0cb4" rx="1"/>
<rect x="1003.20" y="278.80" width="11.60" height="1.2" fill="#d8d0ee"/>
<rect x="1003.20" y="280.00" width="11.60" height="0.9" fill="#1a0a50"/>
<path d="M1002.90 257.80h3.5l-3.5 3.5z" fill="#f0f0f0"/>
<rect x="1002.90" y="294.20" width="12.20" height="62.10" fill="#3c0cb4" rx="1"/>
<rect x="1003.20" y="307.80" width="11.60" height="1.2" fill="#d8d0ee"/>
<rect x="1003.20" y="309.00" width="11.60" height="0.9" fill="#1a0a50"/>
<path d="M1002.90 294.20h3.5l-3.5 3.5z" fill="#f0f0f0"/>
<rect x="1016.40" y="221.20" width="12.20" height="35.10" fill="#3c0cb4" rx="1"/>
<rect x="1016.70" y="234.80" width="11.60" height="1.2" fill="#d8d0ee"/>
<rect x="1016.70" y="236.00" width="11.60" height="0.9" fill="#1a0a50"/>
<path d="M1016.40 221.20h3.5l-3.5 3.5z" fill="#f0f0f0"/>
<rect x="1016.40" y="257.80" width="12.20" height="35.10" fill="#3c0cb4" rx="1"/>
<rect x="1016.70" y="278.80" width="11.60" height="1.2" fill="#d8d0ee"/>
<rect x="1016.70" y="280.00" width="11.60" height="0.9" fill="#1a0a50"/>
<path d="M1016.40 257.80h3.5l-3.5 3.5z" fill="#f0f0f0"/>
<rect x="1016.40" y="294.20" width="12.20" height="62.10" fill="#3c0cb4" rx="1"/>
<rect x="1016.70" y="307.80" width="11.60" height="1.2" fill="#d8d0ee"/>
<rect x="1016.70" y="309.00" width="11.60" height="0.9" fill="#1a0a50"/>
<path d="M1016.40 294.20h3.5l-3.5 3.5z" fill="#f0f0f0"/>
<rect x="177.80" y="294.20" width="12.20" height="62.10" fill="#3c0cb4" rx="1.5"/>
<path d="M177.80 294.20h3.5l-3.5 3.5z" fill="#f0f0f0"/>
<rect x="177.80" y="309.20" width="12.20" height="8.60" fill="#e4e4e4"/>
<rect x="178.00" y="329.00" width="11.80" height="1.2" fill="#d8d0ee"/>
<rect x="178.00" y="330.20" width="11.80" height="0.9" fill="#1a0a50"/>
<rect x="191.40" y="294.20" width="74.60" height="62.10" fill="#7b148a" rx="1.5"/>
<rect x="191.70" y="308.00" width="74.00" height="1.25" fill="#f4e8f6"/>
<rect x="191.70" y="309.25" width="74.00" height="0.80" fill="#101010"/>
<g transform="translate(191.60 310.00)"><svg width="74.30" height="46.2" viewBox="0 0 74.40 46" preserveAspectRatio="none">
<defs><linearGradient id="sw" x1="0" x2="1" y1="0" y2="1"><stop offset="0" stop-color="#a69c9e"/><stop offset=".6" stop-color="#84787a"/><stop offset="1" stop-color="#5c4a48"/></linearGradient><linearGradient id="bw" x1="0" x2="0" y1="0" y2="1"><stop offset="0" stop-color="#6e5e5c"/><stop offset=".2" stop-color="#8a7876"/><stop offset="1" stop-color="#7c6864"/></linearGradient><radialGradient id="sp" cx=".5" cy=".45" r=".5"><stop offset="0" stop-color="#c4bcbc" stop-opacity=".95"/><stop offset=".6" stop-color="#a89c9c" stop-opacity=".55"/><stop offset="1" stop-color="#8a7876" stop-opacity="0"/></radialGradient><linearGradient id="fl" x1="0" x2="1" y1="0" y2="1"><stop offset="0" stop-color="#4a2214"/><stop offset=".35" stop-color="#8e4420"/><stop offset=".65" stop-color="#a65020"/><stop offset="1" stop-color="#6a3016"/></linearGradient></defs>
<rect width="74.4" height="46" fill="url(#bw)"/>
<ellipse cx="34" cy="18" rx="8" ry="13" fill="url(#sp)"/>
<ellipse cx="57" cy="17" rx="8.5" ry="13" fill="url(#sp)"/>
<path d="M0 0 H21.5 V30 L0 34z" fill="url(#sw)"/>
<rect width="74.4" height="1.6" fill="#4e4240" opacity=".8"/>
<path d="M21 29.6 L74.4 29.2 L74.4 46 L0 46 L0 34z" fill="url(#fl)"/>
<path d="M21 29.6 L58 29.4 L56 32 L20 32.5z" fill="#5a2c1a" opacity=".55"/>
<path d="M0 27.2 L25.4 26.2 L25.4 27.8 L16.5 28.6 L16.5 40 L8 46 L0 46z" fill="#3c2220"/>
<path d="M0 27.2 L25.4 26.2 L25.4 27.4 L0 28.8z" fill="#6a4a40"/>
<path d="M6.5 14.2 L20.6 16 L20.6 22.6 L6.5 21.6z" fill="#e4e8f2"/><path d="M12.5 17 L19.5 17.6 L19.6 21.6 L12.8 21.2z" fill="#8cacd4"/><rect x="10" y="22" width="1.6" height="4.4" fill="#c8c0c0"/><rect x="8" y="25.6" width="9" height="1" fill="#d8d0d0"/>
<path d="M30.6 15.6 q2.6 -1.2 3.2 1.2 l-0.6 12 q-0.4 2.2 -2.6 2.6 l-7.4 0.8 q-1.6 -1.4 0.2 -2.6 l3.6 -1.2z" fill="#16181e"/>
<path d="M30.8 17.2 l1.8 0.4 l-1.2 9.6 l-2.2 0.4z" fill="#2c6c9c"/>
<path d="M28.4 32 l0 4.4 M22.6 37.4 q6 2.4 11.4 0 M24.2 39 l9 -2.4 M25 36.4 l7.6 2.6" stroke="#1a1a20" stroke-width="1.3" fill="none" stroke-linecap="round"/>
<path d="M55 26.4 L74.4 25.6 L74.4 40 L62 35.4 L55.4 30.6z" fill="#eeeeee"/>
<path d="M55.4 30.6 L62 35.4 L74.4 40 L74.4 46 L68 46 L55.6 33.6z" fill="#3e2018"/>
<path d="M56 34 L66 44 L63 46 L55 38z" fill="#2a1410" opacity=".6"/>
</svg></g>
<text x="198.7" y="305.2" font-family="Liberation Sans, sans-serif" font-size="9.6" fill="#f0e8f4" textLength="34" lengthAdjust="spacingAndGlyphs">Diseño ...</text>
<text x="249.2" y="305.6" font-family="Liberation Serif, serif" font-style="italic" font-size="11" fill="#f0e8f4">fx</text>
<rect x="267.00" y="294.20" width="58.00" height="62.10" fill="#064e6c" rx="1.5"/>
<rect x="267.30" y="308.00" width="57.40" height="1.25" fill="#e8eef2"/>
<rect x="267.30" y="309.25" width="57.40" height="0.80" fill="#101010"/>
<rect x="267.30" y="309.40" width="57.40" height="46.80" fill="#1f2024"/>
<rect x="267.30" y="309.40" width="57.40" height="1.50" fill="#0c0c0e"/>
<rect x="269.80" y="310.00" width="15.00" height="1.10" fill="#5c5e64"/>
<rect x="267.30" y="312.00" width="57.40" height="1.60" fill="#2c2e33"/>
<rect x="268.30" y="312.40" width="28.00" height="0.90" fill="#44464c"/>
<rect x="300.34" y="321.00" width="2.40" height="5.00" fill="#4a7cd8" rx="1.1" opacity=".85"/>
<rect x="303.04" y="320.00" width="2.40" height="5.00" fill="#c8443a" rx="1.1" opacity=".85"/>
<rect x="305.74" y="321.00" width="2.40" height="5.00" fill="#d8a820" rx="1.1" opacity=".85"/>
<rect x="308.44" y="320.00" width="2.40" height="5.00" fill="#4a7cd8" rx="1.1" opacity=".85"/>
<rect x="311.14" y="321.00" width="2.40" height="5.00" fill="#3a9858" rx="1.1" opacity=".85"/>
<rect x="313.84" y="320.00" width="2.40" height="5.00" fill="#c8443a" rx="1.1" opacity=".85"/>
<rect x="290.55" y="329.60" width="33.87" height="3.20" fill="#63656b" rx="1.5"/>
<rect x="298.87" y="335.30" width="9.40" height="2.00" fill="#3a3c42" rx="0.6"/>
<rect x="310.06" y="335.30" width="9.00" height="2.00" fill="#3a3c42" rx="0.6"/>
<rect x="267.30" y="346.60" width="57.40" height="3.20" fill="#191a1d"/>
<rect x="269.30" y="347.70" width="3.00" height="0.90" fill="#6a6c70"/>
<rect x="269.30" y="350.60" width="31.00" height="1.30" fill="#55575d"/>
<rect x="267.30" y="353.20" width="57.40" height="3.00" fill="#131c38"/>
<rect x="302.89" y="353.80" width="1.70" height="1.70" fill="#3a8ae8"/>
<rect x="305.59" y="353.80" width="1.70" height="1.70" fill="#2a4a9a"/>
<rect x="308.29" y="353.80" width="1.70" height="1.70" fill="#d8d8e8"/>
<rect x="310.99" y="353.80" width="1.70" height="1.70" fill="#e0603a"/>
<text x="274.0" y="305.2" font-family="Liberation Sans, sans-serif" font-size="9.6" fill="#e8f0f4" textLength="14.8" lengthAdjust="spacingAndGlyphs">20...</text>
<text x="308.2" y="305.6" font-family="Liberation Serif, serif" font-style="italic" font-size="11" fill="#3c7c94">fx</text>
<rect x="326.10" y="294.20" width="34.90" height="62.10" fill="#064e6c" rx="1.5"/>
<rect x="326.40" y="308.00" width="34.30" height="1.25" fill="#e8eef2"/>
<rect x="326.40" y="309.25" width="34.30" height="0.80" fill="#101010"/>
<rect x="326.40" y="309.40" width="34.40" height="46.80" fill="#f5f5f9"/>
<rect x="326.40" y="309.40" width="34.40" height="4.40" fill="#24262c"/>
<rect x="329.40" y="309.90" width="14.00" height="1.30" fill="#5c5e68"/>
<defs><linearGradient id="ca" x1="0" x2="1"><stop offset="0" stop-color="#20bccc"/><stop offset=".55" stop-color="#2a96e0"/><stop offset="1" stop-color="#7a40e0"/></linearGradient></defs>
<rect x="326.40" y="314.00" width="34.40" height="2.70" fill="url(#ca)"/>
<rect x="347.04" y="314.30" width="2.00" height="2.00" fill="#f0a050" rx="1"/>
<rect x="326.40" y="316.70" width="34.40" height="1.40" fill="#fbfbfd"/>
<rect x="326.40" y="318.10" width="3.60" height="34.40" fill="#f0ecfa"/>
<rect x="327.40" y="321.40" width="1.50" height="1.50" fill="#8a5ce8" rx="0.4"/>
<rect x="327.40" y="326.00" width="1.50" height="1.50" fill="#a890e8" rx="0.4"/>
<rect x="327.40" y="330.60" width="1.50" height="1.50" fill="#a890e8" rx="0.4"/>
<rect x="327.40" y="335.20" width="1.50" height="1.50" fill="#f0b050" rx="0.4"/>
<rect x="327.40" y="339.80" width="1.50" height="1.50" fill="#a890e8" rx="0.4"/>
<rect x="327.40" y="344.40" width="1.50" height="1.50" fill="#a890e8" rx="0.4"/>
<rect x="331.00" y="318.80" width="16.86" height="33.40" fill="#fafafe"/>
<rect x="332.60" y="319.40" width="6.00" height="1.30" fill="#30c0d0" rx="0.5"/>
<rect x="331.80" y="322.00" width="17.20" height="3.00" fill="#8a48f0" rx="0.7"/>
<rect x="333.40" y="327.00" width="13.07" height="1.10" fill="#b4b4c4" rx="0.5"/>
<rect x="332.20" y="326.90" width="0.90" height="0.90" fill="#f0b050"/>
<rect x="333.40" y="330.40" width="13.07" height="1.10" fill="#b4b4c4" rx="0.5"/>
<rect x="332.20" y="330.30" width="0.90" height="0.90" fill="#f0b050"/>
<rect x="333.40" y="333.80" width="13.07" height="1.10" fill="#b4b4c4" rx="0.5"/>
<rect x="332.20" y="333.70" width="0.90" height="0.90" fill="#f0b050"/>
<rect x="333.40" y="337.20" width="13.07" height="1.10" fill="#b4b4c4" rx="0.5"/>
<rect x="332.20" y="337.10" width="0.90" height="0.90" fill="#f0b050"/>
<rect x="333.40" y="340.60" width="13.07" height="1.10" fill="#b4b4c4" rx="0.5"/>
<rect x="332.20" y="340.50" width="0.90" height="0.90" fill="#f0b050"/>
<rect x="335.80" y="345.80" width="8.80" height="3.00" fill="#dcdce4" rx="1.2"/>
<rect x="332.80" y="350.40" width="5.00" height="1.00" fill="#8888a0"/>
<defs><linearGradient id="cg" x1="0" y1="0" x2="1" y2="1"><stop offset="0" stop-color="#7a3ce0"/><stop offset=".5" stop-color="#4a6ae0"/><stop offset="1" stop-color="#20b8c8"/></linearGradient></defs>
<rect x="351.86" y="319.00" width="7.00" height="1.20" fill="#9090a0"/>
<rect x="351.86" y="322.50" width="8.94" height="11.20" fill="url(#cg)"/>
<rect x="352.54" y="336.80" width="2.80" height="2.80" fill="#7a5ce0" rx="0.8"/>
<rect x="358.74" y="336.80" width="2.00" height="2.80" fill="#5aa8e8" rx="0.8"/>
<rect x="352.54" y="341.00" width="4.60" height="1.00" fill="#8c8ca0"/>
<rect x="352.54" y="342.80" width="3.60" height="1.00" fill="#a8a8b8"/>
<rect x="352.54" y="345.80" width="8.26" height="2.40" fill="#c8d4ec"/>
<rect x="326.40" y="351.60" width="34.40" height="1.60" fill="#e8e8f0"/>
<rect x="326.40" y="353.20" width="34.40" height="3.00" fill="#141c3c"/>
<rect x="347.04" y="353.90" width="6.00" height="1.40" fill="#7c84a8"/>
<text x="344.6" y="305.6" font-family="Liberation Serif, serif" font-style="italic" font-size="11" fill="#3c7c94">fx</text>
<rect x="361.90" y="294.20" width="1.10" height="62.10" fill="#064e6c" rx="0.4"/>
<rect x="364.00" y="294.20" width="8.00" height="62.10" fill="#064e6c" rx="1.5"/>
<rect x="373.20" y="294.20" width="12.80" height="62.10" fill="#064e6c" rx="1.5"/>
<rect x="373.50" y="308.20" width="12.20" height="1.2" fill="#e0e8ec"/>
<rect x="373.50" y="309.40" width="12.20" height="0.9" fill="#022030"/>
<rect x="387.20" y="294.20" width="4.90" height="62.10" fill="#064e6c" rx="1.5"/>
<rect x="387.50" y="308.20" width="4.30" height="1.2" fill="#e0e8ec"/>
<rect x="387.50" y="309.40" width="4.30" height="0.9" fill="#022030"/>
<rect x="393.30" y="294.20" width="5.30" height="62.10" fill="#064e6c" rx="1.5"/>
<rect x="393.60" y="308.20" width="4.70" height="1.2" fill="#e0e8ec"/>
<rect x="393.60" y="309.40" width="4.70" height="0.9" fill="#022030"/>
<rect x="400.00" y="294.20" width="5.90" height="62.10" fill="#064e6c" rx="1.5"/>
<rect x="400.30" y="308.20" width="5.30" height="1.2" fill="#e0e8ec"/>
<rect x="400.30" y="309.40" width="5.30" height="0.9" fill="#022030"/>
<rect x="407.30" y="294.20" width="19.60" height="62.10" fill="#064e6c" rx="1.5"/>
<rect x="428.20" y="294.20" width="44.60" height="62.10" fill="#064e6c" rx="1.5"/>
<rect x="428.50" y="308.00" width="44.00" height="1.25" fill="#e8eef2"/>
<rect x="428.50" y="309.25" width="44.00" height="0.80" fill="#101010"/>
<rect x="428.50" y="309.40" width="44.00" height="46.80" fill="#f2f2f7"/>
<rect x="428.50" y="309.40" width="44.00" height="4.60" fill="#22242a"/>
<rect x="431.50" y="309.90" width="17.60" height="1.20" fill="#50525a"/>
<rect x="429.50" y="312.30" width="30.80" height="0.90" fill="#3c3e46"/>
<defs><linearGradient id="ck" x1="0" x2="1"><stop offset="0" stop-color="#20bcd4"/><stop offset=".5" stop-color="#3096e4"/><stop offset="1" stop-color="#7444e0"/></linearGradient></defs>
<rect x="428.50" y="314.00" width="44.00" height="7.40" fill="url(#ck)"/>
<rect x="449.18" y="314.60" width="2.20" height="2.20" fill="#f0a040" rx="1.1"/>
<rect x="451.38" y="315.20" width="18.48" height="1.00" fill="#5a8af0"/>
<rect x="435.54" y="318.80" width="31.68" height="1.20" fill="#60c8e8" rx="0.6"/>
<rect x="440.50" y="318.70" width="3.40" height="1.20" fill="#e8c060" rx="0.6"/>
<rect x="428.50" y="321.40" width="3.60" height="30.80" fill="#fafafd"/>
<rect x="430.90" y="323.00" width="1.70" height="1.70" fill="#5a9ae8" rx="0.4"/>
<rect x="430.90" y="328.00" width="1.70" height="1.70" fill="#8890a8" rx="0.4"/>
<rect x="430.90" y="333.00" width="1.70" height="1.70" fill="#a0a8b8" rx="0.4"/>
<rect x="430.90" y="338.00" width="1.70" height="1.70" fill="#f0b840" rx="0.4"/>
<rect x="430.90" y="343.00" width="1.70" height="1.70" fill="#8890a8" rx="0.4"/>
<rect x="436.50" y="324.00" width="9.00" height="1.30" fill="#b8b8c4"/>
<rect x="447.90" y="324.00" width="4.00" height="1.30" fill="#b8b8c4"/>
<rect x="455.50" y="323.60" width="3.60" height="1.80" fill="#60606c"/>
<rect x="439.50" y="327.60" width="5.00" height="0.90" fill="#8a8a98"/>
<rect x="451.50" y="327.60" width="3.40" height="0.90" fill="#8a8a98"/>
<rect x="435.10" y="329.80" width="11.30" height="8.00" fill="#2e2628" rx="0.6"/>
<rect x="436.30" y="330.60" width="9.00" height="4.20" fill="#5c5052" rx="0.8"/>
<rect x="435.10" y="336.40" width="1.60" height="1.60" fill="#e08050"/>
<rect x="444.70" y="336.40" width="1.60" height="1.60" fill="#e08050"/>
<rect x="448.10" y="329.80" width="11.00" height="8.00" fill="#100c0e" rx="0.6"/>
<rect x="451.50" y="332.80" width="6.40" height="1.60" fill="#a8a8a8" rx="0.6"/>
<rect x="435.10" y="339.00" width="11.30" height="10.40" fill="#f4dcd6" rx="0.6"/>
<rect x="436.50" y="340.40" width="3.00" height="3.00" fill="#e89a88" rx="1.5"/>
<rect x="441.50" y="343.40" width="3.00" height="3.00" fill="#f0b0a0" rx="1.5"/>
<rect x="438.50" y="345.90" width="2.40" height="2.40" fill="#f0a898" rx="1.2"/>
<rect x="448.10" y="339.00" width="11.00" height="10.40" fill="#f4f0e0" rx="0.6"/>
<rect x="451.90" y="340.40" width="3.00" height="3.00" fill="#e8d020" rx="1.5"/>
<rect x="448.90" y="344.80" width="2.60" height="2.60" fill="#f0a830" rx="1.3"/>
<rect x="455.50" y="345.80" width="2.80" height="2.80" fill="#70b8e0" rx="1.4"/>
<rect x="452.10" y="345.40" width="3.00" height="3.00" fill="#c8d838" rx="1.5"/>
<rect x="467.90" y="329.00" width="4.60" height="14.80" fill="#ffffff"/>
<rect x="428.50" y="353.20" width="44.00" height="3.00" fill="#161e3e"/>
<rect x="434.50" y="351.00" width="6.00" height="0.90" fill="#8890a0"/>
<rect x="442.50" y="351.00" width="9.00" height="0.90" fill="#8890a0"/>
<rect x="464.50" y="353.80" width="1.60" height="1.60" fill="#3a8ae8"/>
<rect x="468.10" y="353.80" width="1.40" height="1.40" fill="#c8483a"/>
<text x="456.0" y="305.6" font-family="Liberation Serif, serif" font-style="italic" font-size="11" fill="#3c7c94">fx</text>
<rect x="474.20" y="294.20" width="2.60" height="62.10" fill="#064e6c" rx="1"/>
<rect x="474.30" y="308.20" width="2.40" height="1.2" fill="#e0e8ec"/>
<rect x="474.30" y="309.40" width="2.40" height="0.9" fill="#022030"/>
<rect x="478.00" y="294.20" width="22.00" height="62.10" fill="#064e6c" rx="1.5"/>
<rect x="478.30" y="308.00" width="21.40" height="1.25" fill="#e8eef2"/>
<rect x="478.30" y="309.25" width="21.40" height="0.80" fill="#101010"/>
<rect x="478.30" y="309.40" width="21.40" height="46.80" fill="#eef0f6"/>
<rect x="478.30" y="309.40" width="21.40" height="4.60" fill="#22242a"/>
<rect x="480.80" y="309.80" width="12.84" height="1.60" fill="#5c5c78"/>
<rect x="479.30" y="312.30" width="17.12" height="0.90" fill="#3c3e46"/>
<defs><linearGradient id="cbl" x1="0" x2="1"><stop offset="0" stop-color="#1cc0cc"/><stop offset="1" stop-color="#24a8dc"/></linearGradient></defs>
<rect x="478.30" y="314.00" width="21.40" height="3.70" fill="url(#cbl)"/>
<rect x="490.30" y="314.80" width="2.20" height="1.80" fill="#d8f0f8" rx="0.5"/>
<rect x="478.30" y="317.70" width="3.60" height="34.80" fill="#f8f8fc"/>
<rect x="480.50" y="322.40" width="1.70" height="1.70" fill="#8890a8" rx="0.4"/>
<rect x="480.50" y="327.80" width="1.70" height="1.70" fill="#a0a8b8" rx="0.4"/>
<rect x="480.50" y="333.20" width="1.70" height="1.70" fill="#c0c4d0" rx="0.4"/>
<rect x="480.50" y="338.60" width="1.70" height="1.70" fill="#f0b840" rx="0.4"/>
<rect x="480.50" y="344.00" width="1.70" height="1.70" fill="#a0a8b8" rx="0.4"/>
<rect x="479.90" y="346.90" width="2.60" height="2.00" fill="#b4b8f0" rx="0.5"/>
<rect x="478.30" y="353.20" width="21.40" height="3.00" fill="#161e3e"/>
<rect x="484.30" y="351.00" width="10.70" height="0.90" fill="#8890a0"/>
<rect x="492.30" y="351.00" width="6.42" height="0.90" fill="#8890a0"/>
<rect x="501.30" y="294.20" width="68.50" height="62.10" fill="#064e6c" rx="1.5"/>
<rect x="501.60" y="308.00" width="67.90" height="1.25" fill="#e8eef2"/>
<rect x="501.60" y="309.25" width="67.90" height="0.80" fill="#101010"/>
<rect x="501.60" y="309.40" width="67.90" height="46.80" fill="#eef0f6"/>
<rect x="501.60" y="309.40" width="67.90" height="4.60" fill="#22242a"/>
<rect x="504.10" y="309.80" width="16.00" height="1.60" fill="#5c5c78"/>
<rect x="502.60" y="312.30" width="30.00" height="0.90" fill="#3c3e46"/>
<defs><linearGradient id="cb" x1="0" x2="1"><stop offset="0" stop-color="#1cc0cc"/><stop offset=".6" stop-color="#2a9ae0"/><stop offset="1" stop-color="#7a40e0"/></linearGradient></defs>
<rect x="501.60" y="314.00" width="67.90" height="3.70" fill="url(#cb)"/>
<rect x="538.95" y="314.80" width="2.20" height="1.80" fill="#d8f0f8" rx="0.5"/>
<rect x="501.60" y="317.70" width="3.60" height="34.80" fill="#f8f8fc"/>
<rect x="503.80" y="322.40" width="1.70" height="1.70" fill="#8890a8" rx="0.4"/>
<rect x="503.80" y="327.80" width="1.70" height="1.70" fill="#a0a8b8" rx="0.4"/>
<rect x="503.80" y="333.20" width="1.70" height="1.70" fill="#c0c4d0" rx="0.4"/>
<rect x="503.80" y="338.60" width="1.70" height="1.70" fill="#f0b840" rx="0.4"/>
<rect x="503.80" y="344.00" width="1.70" height="1.70" fill="#a0a8b8" rx="0.4"/>
<rect x="503.20" y="346.90" width="2.60" height="2.00" fill="#b4b8f0" rx="0.5"/>
<rect x="501.60" y="353.20" width="67.90" height="3.00" fill="#161e3e"/>
<rect x="507.60" y="351.00" width="16.00" height="0.90" fill="#8890a0"/>
<rect x="515.60" y="351.00" width="14.00" height="0.90" fill="#8890a0"/>
<rect x="536.20" y="321.40" width="17.60" height="28.60" fill="#fbf0dc"/>
<rect x="538.00" y="334.00" width="3.20" height="4.40" fill="#f0b040" rx="1.5"/>
<rect x="548.50" y="343.50" width="4.00" height="4.00" fill="#f0c060" rx="2"/>
<rect x="537.40" y="340.00" width="2.60" height="4.00" fill="#b8d4ec" rx="1"/>
<rect x="542.00" y="327.50" width="7.00" height="1.00" fill="#c8a890"/>
<rect x="542.50" y="330.00" width="6.00" height="1.00" fill="#d8b8a0"/>
<rect x="541.50" y="334.50" width="8.00" height="1.00" fill="#e0a898"/>
<rect x="553.20" y="332.00" width="2.00" height="4.40" fill="#f09060"/>
<rect x="552.60" y="338.50" width="2.60" height="5.00" fill="#88b0e0"/>
<text x="508.6" y="305.2" font-family="Liberation Sans, sans-serif" font-size="9.6" fill="#e8f0f4" textLength="27.3" lengthAdjust="spacingAndGlyphs">2024-...</text>
<text x="553.6" y="305.6" font-family="Liberation Serif, serif" font-style="italic" font-size="11" fill="#e8f0f4">fx</text>
<rect x="571.20" y="294.20" width="11.70" height="62.10" fill="#064e6c" rx="1.5"/>
<rect x="584.20" y="294.20" width="67.00" height="62.10" fill="#7b148a" rx="1.5"/>
<rect x="584.50" y="308.00" width="66.40" height="1.25" fill="#f4e8f6"/>
<rect x="584.50" y="309.25" width="66.40" height="0.80" fill="#101010"/>
<g transform="translate(584.50 310.00)"><svg width="66.40" height="46.2" viewBox="0 0 66.49 46" preserveAspectRatio="none">
<defs><linearGradient id="sw" x1="0" x2="1" y1="0" y2="1"><stop offset="0" stop-color="#a69c9e"/><stop offset=".6" stop-color="#84787a"/><stop offset="1" stop-color="#5c4a48"/></linearGradient><linearGradient id="bw" x1="0" x2="0" y1="0" y2="1"><stop offset="0" stop-color="#6e5e5c"/><stop offset=".2" stop-color="#8a7876"/><stop offset="1" stop-color="#7c6864"/></linearGradient><radialGradient id="sp" cx=".5" cy=".45" r=".5"><stop offset="0" stop-color="#c4bcbc" stop-opacity=".95"/><stop offset=".6" stop-color="#a89c9c" stop-opacity=".55"/><stop offset="1" stop-color="#8a7876" stop-opacity="0"/></radialGradient><linearGradient id="fl" x1="0" x2="1" y1="0" y2="1"><stop offset="0" stop-color="#4a2214"/><stop offset=".35" stop-color="#8e4420"/><stop offset=".65" stop-color="#a65020"/><stop offset="1" stop-color="#6a3016"/></linearGradient></defs>
<rect width="74.4" height="46" fill="url(#bw)"/>
<ellipse cx="34" cy="18" rx="8" ry="13" fill="url(#sp)"/>
<ellipse cx="57" cy="17" rx="8.5" ry="13" fill="url(#sp)"/>
<path d="M0 0 H21.5 V30 L0 34z" fill="url(#sw)"/>
<rect width="74.4" height="1.6" fill="#4e4240" opacity=".8"/>
<path d="M21 29.6 L74.4 29.2 L74.4 46 L0 46 L0 34z" fill="url(#fl)"/>
<path d="M21 29.6 L58 29.4 L56 32 L20 32.5z" fill="#5a2c1a" opacity=".55"/>
<path d="M0 27.2 L25.4 26.2 L25.4 27.8 L16.5 28.6 L16.5 40 L8 46 L0 46z" fill="#3c2220"/>
<path d="M0 27.2 L25.4 26.2 L25.4 27.4 L0 28.8z" fill="#6a4a40"/>
<path d="M6.5 14.2 L20.6 16 L20.6 22.6 L6.5 21.6z" fill="#e4e8f2"/><path d="M12.5 17 L19.5 17.6 L19.6 21.6 L12.8 21.2z" fill="#8cacd4"/><rect x="10" y="22" width="1.6" height="4.4" fill="#c8c0c0"/><rect x="8" y="25.6" width="9" height="1" fill="#d8d0d0"/>
<path d="M30.6 15.6 q2.6 -1.2 3.2 1.2 l-0.6 12 q-0.4 2.2 -2.6 2.6 l-7.4 0.8 q-1.6 -1.4 0.2 -2.6 l3.6 -1.2z" fill="#16181e"/>
<path d="M30.8 17.2 l1.8 0.4 l-1.2 9.6 l-2.2 0.4z" fill="#2c6c9c"/>
<path d="M28.4 32 l0 4.4 M22.6 37.4 q6 2.4 11.4 0 M24.2 39 l9 -2.4 M25 36.4 l7.6 2.6" stroke="#1a1a20" stroke-width="1.3" fill="none" stroke-linecap="round"/>
<path d="M55 26.4 L74.4 25.6 L74.4 40 L62 35.4 L55.4 30.6z" fill="#eeeeee"/>
<path d="M55.4 30.6 L62 35.4 L74.4 40 L74.4 46 L68 46 L55.6 33.6z" fill="#3e2018"/>
<path d="M56 34 L66 44 L63 46 L55 38z" fill="#2a1410" opacity=".6"/>
</svg></g>
<text x="591.7" y="305.2" font-family="Liberation Sans, sans-serif" font-size="9.6" fill="#f0e8f4" textLength="21.4" lengthAdjust="spacingAndGlyphs">Dise...</text>
<text x="634.4" y="305.6" font-family="Liberation Serif, serif" font-style="italic" font-size="11" fill="#f0e8f4">fx</text>
<rect x="178.00" y="383.30" width="12.10" height="35.30" fill="#2c5a0c" rx="1.5"/>
<rect x="178.00" y="401.60" width="12.10" height="1.00" fill="#c8e0b0"/>
<rect x="178.00" y="402.80" width="12.10" height="5.40" fill="#8ec860"/>
<rect x="178.00" y="408.20" width="12.10" height="5.20" fill="#3c6c14"/>
<path d="M178 413.8 l2 -0.6 l2 0.9 l2 -0.7 l2 0.8 l2 -0.9 l2.1 0.6 v3.8 q0 1.5 -1.5 1.5 h-9.1 q-1.5 0 -1.5 -1.5z" fill="#8ec860"/>
<path d="M178.00 383.30h3.5l-3.5 3.5z" fill="#f0f0f0"/>
<rect x="190.90" y="419.00" width="459.60" height="36.50" fill="#8c8c8c" rx="1.8"/>
<rect x="191.20" y="419.50" width="459.00" height="35.60" fill="#fafafa" rx="1.5"/>
<rect x="192.90" y="421.60" width="455.80" height="31.50" fill="#262c00"/>
<rect x="193.50" y="422.30" width="454.80" height="30.60" fill="#485400"/>
<rect x="193.50" y="445.00" width="454.80" height="7.90" fill="#687a00"/>
<path d="M193.5 441.7 L648.3 441.7 L648.3 445.0 L193.5 445.0z" fill="#b6da00"/>
<path d="M266.3 446.0 L267.1 446.0 L268.8 452.6 L264.4 452.6z" fill="#b6da00"/>
<path d="M280.5 444.5 L286.5 444.5 L288.0 452.6 L278.6 452.6z" fill="#b6da00"/>
<path d="M327.0 444.5 L330.6 444.5 L331.6 452.6 L326.0 452.6z" fill="#b6da00"/>
<path d="M306.4 434.8 L318.8 434.8 L320.0 441.8 L304.8 441.8z" fill="#b6da00"/>
<path d="M306.0 445.0 L320.6 445.0 L322.0 452.6 L304.0 452.6z" fill="#b6da00"/>
<path d="M451.2 434.8 L465.0 434.8 L466.2 441.8 L449.6 441.8z" fill="#b6da00"/>
<path d="M450.8 445.0 L466.8 445.0 L468.2 452.6 L448.8 452.6z" fill="#b6da00"/>
<path d="M536.0 434.8 L568.8 434.8 L570.0 441.8 L534.4 441.8z" fill="#b6da00"/>
<path d="M535.6 445.0 L570.6 445.0 L572.0 452.6 L533.6 452.6z" fill="#b6da00"/>
<rect x="193.50" y="439.70" width="454.80" height="1.40" fill="#c4c4c0"/>
<rect x="196.00" y="452.00" width="4.00" height="0.70" fill="#7e9010"/>
<rect x="207.70" y="452.00" width="4.00" height="0.70" fill="#7e9010"/>
<rect x="219.40" y="452.00" width="4.00" height="0.70" fill="#7e9010"/>
<rect x="231.10" y="452.00" width="4.00" height="0.70" fill="#7e9010"/>
<rect x="242.80" y="452.00" width="4.00" height="0.70" fill="#7e9010"/>
<rect x="254.50" y="452.00" width="4.00" height="0.70" fill="#7e9010"/>
<rect x="266.20" y="452.00" width="4.00" height="0.70" fill="#7e9010"/>
<path d="M284.7 434.0 L282.9 437.2 L288.1 444.0 L282.9 452.4" stroke="#ecece0" stroke-width="1.0" fill="none"/>
<path d="M308.4 434.0 L306.6 437.2 L311.8 444.0 L306.6 452.4" stroke="#ecece0" stroke-width="1.0" fill="none"/>
<path d="M332.2 434.0 L330.4 437.2 L335.6 444.0 L330.4 452.4" stroke="#ecece0" stroke-width="1.0" fill="none"/>
<path d="M355.8 434.0 L354.0 437.2 L359.2 444.0 L354.0 452.4" stroke="#ecece0" stroke-width="1.0" fill="none"/>
<path d="M379.9 434.0 L378.1 437.2 L383.3 444.0 L378.1 452.4" stroke="#ecece0" stroke-width="1.0" fill="none"/>
<path d="M403.7 434.0 L401.9 437.2 L407.1 444.0 L401.9 452.4" stroke="#ecece0" stroke-width="1.0" fill="none"/>
<path d="M427.4 434.0 L425.6 437.2 L430.8 444.0 L425.6 452.4" stroke="#ecece0" stroke-width="1.0" fill="none"/>
<path d="M450.7 434.0 L448.9 437.2 L454.1 444.0 L448.9 452.4" stroke="#ecece0" stroke-width="1.0" fill="none"/>
<path d="M474.9 434.0 L473.1 437.2 L478.3 444.0 L473.1 452.4" stroke="#ecece0" stroke-width="1.0" fill="none"/>
<path d="M499.1 434.0 L497.2 437.2 L502.4 444.0 L497.2 452.4" stroke="#ecece0" stroke-width="1.0" fill="none"/>
<path d="M523.0 434.0 L521.2 437.2 L526.5 444.0 L521.2 452.4" stroke="#ecece0" stroke-width="1.0" fill="none"/>
<path d="M547.4 434.0 L545.6 437.2 L550.8 444.0 L545.6 452.4" stroke="#ecece0" stroke-width="1.0" fill="none"/>
<path d="M571.6 434.0 L569.8 437.2 L575.0 444.0 L569.8 452.4" stroke="#ecece0" stroke-width="1.0" fill="none"/>
<rect x="308.60" y="437.90" width="8.40" height="1.10" fill="#f0f0e4"/>
<rect x="452.00" y="437.90" width="11.80" height="1.10" fill="#f0f0e4"/>
<rect x="537.00" y="437.90" width="31.00" height="1.10" fill="#f0f0e4"/>
<g transform="translate(265.2 440.0) rotate(38)"><rect x="-3.0" y="-3.5" width="6.0" height="7.0" rx="1.7" fill="#a2a2a2" stroke="#2e2e28" stroke-width="1.0"/><rect x="-1.6" y="-2.4" width="2.0" height="4.6" rx="0.9" fill="#bcbcbc"/></g>
<g transform="translate(268.2 441.0) rotate(38)"><rect x="-3.0" y="-3.5" width="6.0" height="7.0" rx="1.7" fill="#a2a2a2" stroke="#2e2e28" stroke-width="1.0"/><rect x="-1.6" y="-2.4" width="2.0" height="4.6" rx="0.9" fill="#bcbcbc"/></g>
<g transform="translate(279.1 439.6) rotate(38)"><rect x="-3.0" y="-3.5" width="6.0" height="7.0" rx="1.7" fill="#a2a2a2" stroke="#2e2e28" stroke-width="1.0"/><rect x="-1.6" y="-2.4" width="2.0" height="4.6" rx="0.9" fill="#bcbcbc"/></g>
<g transform="translate(286.2 440.8) rotate(38)"><rect x="-3.0" y="-3.5" width="6.0" height="7.0" rx="1.7" fill="#a2a2a2" stroke="#2e2e28" stroke-width="1.0"/><rect x="-1.6" y="-2.4" width="2.0" height="4.6" rx="0.9" fill="#bcbcbc"/></g>
<g transform="translate(304.6 439.2) rotate(38)"><rect x="-3.0" y="-3.5" width="6.0" height="7.0" rx="1.7" fill="#a2a2a2" stroke="#2e2e28" stroke-width="1.0"/><rect x="-1.6" y="-2.4" width="2.0" height="4.6" rx="0.9" fill="#bcbcbc"/></g>
<g transform="translate(320.6 439.8) rotate(38)"><rect x="-3.0" y="-3.5" width="6.0" height="7.0" rx="1.7" fill="#a2a2a2" stroke="#2e2e28" stroke-width="1.0"/><rect x="-1.6" y="-2.4" width="2.0" height="4.6" rx="0.9" fill="#bcbcbc"/></g>
<g transform="translate(326.9 439.2) rotate(38)"><rect x="-3.0" y="-3.5" width="6.0" height="7.0" rx="1.7" fill="#a2a2a2" stroke="#2e2e28" stroke-width="1.0"/><rect x="-1.6" y="-2.4" width="2.0" height="4.6" rx="0.9" fill="#bcbcbc"/></g>
<g transform="translate(330.9 440.6) rotate(38)"><rect x="-3.0" y="-3.5" width="6.0" height="7.0" rx="1.7" fill="#a2a2a2" stroke="#2e2e28" stroke-width="1.0"/><rect x="-1.6" y="-2.4" width="2.0" height="4.6" rx="0.9" fill="#bcbcbc"/></g>
<g transform="translate(448.9 439.4) rotate(38)"><rect x="-3.0" y="-3.5" width="6.0" height="7.0" rx="1.7" fill="#a2a2a2" stroke="#2e2e28" stroke-width="1.0"/><rect x="-1.6" y="-2.4" width="2.0" height="4.6" rx="0.9" fill="#bcbcbc"/></g>
<g transform="translate(466.9 440.2) rotate(38)"><rect x="-3.0" y="-3.5" width="6.0" height="7.0" rx="1.7" fill="#a2a2a2" stroke="#2e2e28" stroke-width="1.0"/><rect x="-1.6" y="-2.4" width="2.0" height="4.6" rx="0.9" fill="#bcbcbc"/></g>
<g transform="translate(533.8 439.4) rotate(38)"><rect x="-3.0" y="-3.5" width="6.0" height="7.0" rx="1.7" fill="#a2a2a2" stroke="#2e2e28" stroke-width="1.0"/><rect x="-1.6" y="-2.4" width="2.0" height="4.6" rx="0.9" fill="#bcbcbc"/></g>
<g transform="translate(570.6 440.2) rotate(38)"><rect x="-3.0" y="-3.5" width="6.0" height="7.0" rx="1.7" fill="#a2a2a2" stroke="#2e2e28" stroke-width="1.0"/><rect x="-1.6" y="-2.4" width="2.0" height="4.6" rx="0.9" fill="#bcbcbc"/></g>
<g transform="translate(197.8 434.3)"><rect width="8.8" height="8.8" fill="#c4c4c4"/><path d="M1 7.8 L7.8 1 L7.8 7.8z" fill="#8a8a8a"/><path d="M1 1 h6.8 L1 7.8z" fill="#a8a8a8"/><rect x=".5" y=".5" width="7.8" height="7.8" fill="none" stroke="#d8d8d8" stroke-width="1"/></g>
<g transform="translate(635.6 434.5)"><rect width="8.8" height="8.8" fill="#c4c4c4"/><path d="M1 7.8 L7.8 1 L7.8 7.8z" fill="#8a8a8a"/><path d="M1 1 h6.8 L1 7.8z" fill="#a8a8a8"/><rect x=".5" y=".5" width="7.8" height="7.8" fill="none" stroke="#d8d8d8" stroke-width="1"/></g>
<text x="613.2" y="432.4" font-family="DejaVu Sans, sans-serif" font-size="11" font-weight="bold" fill="#f4f4e8">♫</text>
<text x="633.2" y="431.6" font-family="Liberation Serif, serif" font-style="italic" font-size="11" fill="#eef0e0">fx</text>
<path d="M191.20 419.40h3.5l-3.5 3.5z" fill="#f0f0f0"/>
<rect x="177.00" y="41.00" width="1.00" height="10.60" fill="#a8a8a8"/>
<rect x="181.80" y="46.80" width="1.00" height="4.80" fill="#7c7c7c"/>
<rect x="186.60" y="46.80" width="1.00" height="4.80" fill="#7c7c7c"/>
<rect x="191.40" y="46.80" width="1.00" height="4.80" fill="#7c7c7c"/>
<rect x="196.20" y="46.80" width="1.00" height="4.80" fill="#7c7c7c"/>
<rect x="201.00" y="46.80" width="1.00" height="4.80" fill="#7c7c7c"/>
<rect x="205.80" y="46.80" width="1.00" height="4.80" fill="#7c7c7c"/>
<rect x="210.60" y="46.80" width="1.00" height="4.80" fill="#7c7c7c"/>
<rect x="215.40" y="46.80" width="1.00" height="4.80" fill="#7c7c7c"/>
<rect x="220.20" y="46.80" width="1.00" height="4.80" fill="#7c7c7c"/>
<rect x="225.00" y="46.80" width="1.00" height="4.80" fill="#7c7c7c"/>
<rect x="229.80" y="46.80" width="1.00" height="4.80" fill="#7c7c7c"/>
<rect x="234.60" y="46.80" width="1.00" height="4.80" fill="#7c7c7c"/>
<rect x="239.40" y="46.80" width="1.00" height="4.80" fill="#7c7c7c"/>
<rect x="244.20" y="46.80" width="1.00" height="4.80" fill="#7c7c7c"/>
<rect x="249.00" y="41.00" width="1.00" height="10.60" fill="#a8a8a8"/>
<rect x="253.80" y="46.80" width="1.00" height="4.80" fill="#7c7c7c"/>
<rect x="258.60" y="46.80" width="1.00" height="4.80" fill="#7c7c7c"/>
<rect x="263.40" y="46.80" width="1.00" height="4.80" fill="#7c7c7c"/>
<rect x="268.20" y="46.80" width="1.00" height="4.80" fill="#7c7c7c"/>
<rect x="273.00" y="46.80" width="1.00" height="4.80" fill="#7c7c7c"/>
<rect x="277.80" y="46.80" width="1.00" height="4.80" fill="#7c7c7c"/>
<rect x="282.60" y="46.80" width="1.00" height="4.80" fill="#7c7c7c"/>
<rect x="287.40" y="46.80" width="1.00" height="4.80" fill="#7c7c7c"/>
<rect x="292.20" y="46.80" width="1.00" height="4.80" fill="#7c7c7c"/>
<rect x="297.00" y="46.80" width="1.00" height="4.80" fill="#7c7c7c"/>
<rect x="301.80" y="46.80" width="1.00" height="4.80" fill="#7c7c7c"/>
<rect x="306.60" y="46.80" width="1.00" height="4.80" fill="#7c7c7c"/>
<rect x="311.40" y="46.80" width="1.00" height="4.80" fill="#7c7c7c"/>
<rect x="316.20" y="46.80" width="1.00" height="4.80" fill="#7c7c7c"/>
<rect x="321.00" y="41.00" width="1.00" height="10.60" fill="#a8a8a8"/>
<rect x="325.80" y="46.80" width="1.00" height="4.80" fill="#7c7c7c"/>
<rect x="330.60" y="46.80" width="1.00" height="4.80" fill="#7c7c7c"/>
<rect x="335.40" y="46.80" width="1.00" height="4.80" fill="#7c7c7c"/>
<rect x="340.20" y="46.80" width="1.00" height="4.80" fill="#7c7c7c"/>
<rect x="345.00" y="46.80" width="1.00" height="4.80" fill="#7c7c7c"/>
<rect x="349.80" y="46.80" width="1.00" height="4.80" fill="#7c7c7c"/>
<rect x="354.60" y="46.80" width="1.00" height="4.80" fill="#7c7c7c"/>
<rect x="359.40" y="46.80" width="1.00" height="4.80" fill="#7c7c7c"/>
<rect x="364.20" y="46.80" width="1.00" height="4.80" fill="#7c7c7c"/>
<rect x="369.00" y="46.80" width="1.00" height="4.80" fill="#7c7c7c"/>
<rect x="373.80" y="46.80" width="1.00" height="4.80" fill="#7c7c7c"/>
<rect x="378.60" y="46.80" width="1.00" height="4.80" fill="#7c7c7c"/>
<rect x="383.40" y="46.80" width="1.00" height="4.80" fill="#7c7c7c"/>
<rect x="388.20" y="46.80" width="1.00" height="4.80" fill="#7c7c7c"/>
<rect x="393.00" y="41.00" width="1.00" height="10.60" fill="#a8a8a8"/>
<rect x="397.80" y="46.80" width="1.00" height="4.80" fill="#7c7c7c"/>
<rect x="402.60" y="46.80" width="1.00" height="4.80" fill="#7c7c7c"/>
<rect x="407.40" y="46.80" width="1.00" height="4.80" fill="#7c7c7c"/>
<rect x="412.20" y="46.80" width="1.00" height="4.80" fill="#7c7c7c"/>
<rect x="417.00" y="46.80" width="1.00" height="4.80" fill="#7c7c7c"/>
<rect x="421.80" y="46.80" width="1.00" height="4.80" fill="#7c7c7c"/>
<rect x="426.60" y="46.80" width="1.00" height="4.80" fill="#7c7c7c"/>
<rect x="431.40" y="46.80" width="1.00" height="4.80" fill="#7c7c7c"/>
<rect x="436.20" y="46.80" width="1.00" height="4.80" fill="#7c7c7c"/>
<rect x="441.00" y="46.80" width="1.00" height="4.80" fill="#7c7c7c"/>
<rect x="445.80" y="46.80" width="1.00" height="4.80" fill="#7c7c7c"/>
<rect x="450.60" y="46.80" width="1.00" height="4.80" fill="#7c7c7c"/>
<rect x="455.40" y="46.80" width="1.00" height="4.80" fill="#7c7c7c"/>
<rect x="460.20" y="46.80" width="1.00" height="4.80" fill="#7c7c7c"/>
<rect x="465.00" y="41.00" width="1.00" height="10.60" fill="#a8a8a8"/>
<rect x="469.80" y="46.80" width="1.00" height="4.80" fill="#7c7c7c"/>
<rect x="474.60" y="46.80" width="1.00" height="4.80" fill="#7c7c7c"/>
<rect x="479.40" y="46.80" width="1.00" height="4.80" fill="#7c7c7c"/>
<rect x="484.20" y="46.80" width="1.00" height="4.80" fill="#7c7c7c"/>
<rect x="489.00" y="46.80" width="1.00" height="4.80" fill="#7c7c7c"/>
<rect x="493.80" y="46.80" width="1.00" height="4.80" fill="#7c7c7c"/>
<rect x="498.60" y="46.80" width="1.00" height="4.80" fill="#7c7c7c"/>
<rect x="503.40" y="46.80" width="1.00" height="4.80" fill="#7c7c7c"/>
<rect x="508.20" y="46.80" width="1.00" height="4.80" fill="#7c7c7c"/>
<rect x="513.00" y="46.80" width="1.00" height="4.80" fill="#7c7c7c"/>
<rect x="517.80" y="46.80" width="1.00" height="4.80" fill="#7c7c7c"/>
<rect x="522.60" y="46.80" width="1.00" height="4.80" fill="#7c7c7c"/>
<rect x="527.40" y="46.80" width="1.00" height="4.80" fill="#7c7c7c"/>
<rect x="532.20" y="46.80" width="1.00" height="4.80" fill="#7c7c7c"/>
<rect x="537.00" y="41.00" width="1.00" height="10.60" fill="#a8a8a8"/>
<rect x="541.80" y="46.80" width="1.00" height="4.80" fill="#7c7c7c"/>
<rect x="546.60" y="46.80" width="1.00" height="4.80" fill="#7c7c7c"/>
<rect x="551.40" y="46.80" width="1.00" height="4.80" fill="#7c7c7c"/>
<rect x="556.20" y="46.80" width="1.00" height="4.80" fill="#7c7c7c"/>
<rect x="561.00" y="46.80" width="1.00" height="4.80" fill="#7c7c7c"/>
<rect x="565.80" y="46.80" width="1.00" height="4.80" fill="#7c7c7c"/>
<rect x="570.60" y="46.80" width="1.00" height="4.80" fill="#7c7c7c"/>
<rect x="575.40" y="46.80" width="1.00" height="4.80" fill="#7c7c7c"/>
<rect x="580.20" y="46.80" width="1.00" height="4.80" fill="#7c7c7c"/>
<rect x="585.00" y="46.80" width="1.00" height="4.80" fill="#7c7c7c"/>
<rect x="589.80" y="46.80" width="1.00" height="4.80" fill="#7c7c7c"/>
<rect x="594.60" y="46.80" width="1.00" height="4.80" fill="#7c7c7c"/>
<rect x="599.40" y="46.80" width="1.00" height="4.80" fill="#7c7c7c"/>
<rect x="604.20" y="46.80" width="1.00" height="4.80" fill="#7c7c7c"/>
<rect x="609.00" y="41.00" width="1.00" height="10.60" fill="#a8a8a8"/>
<rect x="613.80" y="46.80" width="1.00" height="4.80" fill="#7c7c7c"/>
<rect x="618.60" y="46.80" width="1.00" height="4.80" fill="#7c7c7c"/>
<rect x="623.40" y="46.80" width="1.00" height="4.80" fill="#7c7c7c"/>
<rect x="628.20" y="46.80" width="1.00" height="4.80" fill="#7c7c7c"/>
<rect x="633.00" y="46.80" width="1.00" height="4.80" fill="#7c7c7c"/>
<rect x="637.80" y="46.80" width="1.00" height="4.80" fill="#7c7c7c"/>
<rect x="642.60" y="46.80" width="1.00" height="4.80" fill="#7c7c7c"/>
<rect x="647.40" y="46.80" width="1.00" height="4.80" fill="#7c7c7c"/>
<rect x="652.20" y="46.80" width="1.00" height="4.80" fill="#7c7c7c"/>
<rect x="657.00" y="46.80" width="1.00" height="4.80" fill="#7c7c7c"/>
<rect x="661.80" y="46.80" width="1.00" height="4.80" fill="#7c7c7c"/>
<rect x="666.60" y="46.80" width="1.00" height="4.80" fill="#7c7c7c"/>
<rect x="671.40" y="46.80" width="1.00" height="4.80" fill="#7c7c7c"/>
<rect x="676.20" y="46.80" width="1.00" height="4.80" fill="#7c7c7c"/>
<rect x="681.00" y="41.00" width="1.00" height="10.60" fill="#a8a8a8"/>
<rect x="685.80" y="46.80" width="1.00" height="4.80" fill="#7c7c7c"/>
<rect x="690.60" y="46.80" width="1.00" height="4.80" fill="#7c7c7c"/>
<rect x="695.40" y="46.80" width="1.00" height="4.80" fill="#7c7c7c"/>
<rect x="700.20" y="46.80" width="1.00" height="4.80" fill="#7c7c7c"/>
<rect x="705.00" y="46.80" width="1.00" height="4.80" fill="#7c7c7c"/>
<rect x="709.80" y="46.80" width="1.00" height="4.80" fill="#7c7c7c"/>
<rect x="714.60" y="46.80" width="1.00" height="4.80" fill="#7c7c7c"/>
<rect x="719.40" y="46.80" width="1.00" height="4.80" fill="#7c7c7c"/>
<rect x="724.20" y="46.80" width="1.00" height="4.80" fill="#7c7c7c"/>
<rect x="729.00" y="46.80" width="1.00" height="4.80" fill="#7c7c7c"/>
<rect x="733.80" y="46.80" width="1.00" height="4.80" fill="#7c7c7c"/>
<rect x="738.60" y="46.80" width="1.00" height="4.80" fill="#7c7c7c"/>
<rect x="743.40" y="46.80" width="1.00" height="4.80" fill="#7c7c7c"/>
<rect x="748.20" y="46.80" width="1.00" height="4.80" fill="#7c7c7c"/>
<rect x="753.00" y="41.00" width="1.00" height="10.60" fill="#a8a8a8"/>
<rect x="757.80" y="46.80" width="1.00" height="4.80" fill="#7c7c7c"/>
<rect x="762.60" y="46.80" width="1.00" height="4.80" fill="#7c7c7c"/>
<rect x="767.40" y="46.80" width="1.00" height="4.80" fill="#7c7c7c"/>
<rect x="772.20" y="46.80" width="1.00" height="4.80" fill="#7c7c7c"/>
<rect x="777.00" y="46.80" width="1.00" height="4.80" fill="#7c7c7c"/>
<rect x="781.80" y="46.80" width="1.00" height="4.80" fill="#7c7c7c"/>
<rect x="786.60" y="46.80" width="1.00" height="4.80" fill="#7c7c7c"/>
<rect x="791.40" y="46.80" width="1.00" height="4.80" fill="#7c7c7c"/>
<rect x="796.20" y="46.80" width="1.00" height="4.80" fill="#7c7c7c"/>
<rect x="801.00" y="46.80" width="1.00" height="4.80" fill="#7c7c7c"/>
<rect x="805.80" y="46.80" width="1.00" height="4.80" fill="#7c7c7c"/>
<rect x="810.60" y="46.80" width="1.00" height="4.80" fill="#7c7c7c"/>
<rect x="815.40" y="46.80" width="1.00" height="4.80" fill="#7c7c7c"/>
<rect x="820.20" y="46.80" width="1.00" height="4.80" fill="#7c7c7c"/>
<rect x="825.00" y="41.00" width="1.00" height="10.60" fill="#a8a8a8"/>
<rect x="829.80" y="46.80" width="1.00" height="4.80" fill="#7c7c7c"/>
<rect x="834.60" y="46.80" width="1.00" height="4.80" fill="#7c7c7c"/>
<rect x="839.40" y="46.80" width="1.00" height="4.80" fill="#7c7c7c"/>
<rect x="844.20" y="46.80" width="1.00" height="4.80" fill="#7c7c7c"/>
<rect x="849.00" y="46.80" width="1.00" height="4.80" fill="#7c7c7c"/>
<rect x="853.80" y="46.80" width="1.00" height="4.80" fill="#7c7c7c"/>
<rect x="858.60" y="46.80" width="1.00" height="4.80" fill="#7c7c7c"/>
<rect x="863.40" y="46.80" width="1.00" height="4.80" fill="#7c7c7c"/>
<rect x="868.20" y="46.80" width="1.00" height="4.80" fill="#7c7c7c"/>
<rect x="873.00" y="46.80" width="1.00" height="4.80" fill="#7c7c7c"/>
<rect x="877.80" y="46.80" width="1.00" height="4.80" fill="#7c7c7c"/>
<rect x="882.60" y="46.80" width="1.00" height="4.80" fill="#7c7c7c"/>
<rect x="887.40" y="46.80" width="1.00" height="4.80" fill="#7c7c7c"/>
<rect x="892.20" y="46.80" width="1.00" height="4.80" fill="#7c7c7c"/>
<rect x="897.00" y="41.00" width="1.00" height="10.60" fill="#a8a8a8"/>
<rect x="901.80" y="46.80" width="1.00" height="4.80" fill="#7c7c7c"/>
<rect x="906.60" y="46.80" width="1.00" height="4.80" fill="#7c7c7c"/>
<rect x="911.40" y="46.80" width="1.00" height="4.80" fill="#7c7c7c"/>
<rect x="916.20" y="46.80" width="1.00" height="4.80" fill="#7c7c7c"/>
<rect x="921.00" y="46.80" width="1.00" height="4.80" fill="#7c7c7c"/>
<rect x="925.80" y="46.80" width="1.00" height="4.80" fill="#7c7c7c"/>
<rect x="930.60" y="46.80" width="1.00" height="4.80" fill="#7c7c7c"/>
<rect x="935.40" y="46.80" width="1.00" height="4.80" fill="#7c7c7c"/>
<rect x="940.20" y="46.80" width="1.00" height="4.80" fill="#7c7c7c"/>
<rect x="945.00" y="46.80" width="1.00" height="4.80" fill="#7c7c7c"/>
<rect x="949.80" y="46.80" width="1.00" height="4.80" fill="#7c7c7c"/>
<rect x="954.60" y="46.80" width="1.00" height="4.80" fill="#7c7c7c"/>
<rect x="959.40" y="46.80" width="1.00" height="4.80" fill="#7c7c7c"/>
<rect x="964.20" y="46.80" width="1.00" height="4.80" fill="#7c7c7c"/>
<rect x="969.00" y="41.00" width="1.00" height="10.60" fill="#a8a8a8"/>
<rect x="973.80" y="46.80" width="1.00" height="4.80" fill="#7c7c7c"/>
<rect x="978.60" y="46.80" width="1.00" height="4.80" fill="#7c7c7c"/>
<rect x="983.40" y="46.80" width="1.00" height="4.80" fill="#7c7c7c"/>
<rect x="988.20" y="46.80" width="1.00" height="4.80" fill="#7c7c7c"/>
<rect x="993.00" y="46.80" width="1.00" height="4.80" fill="#7c7c7c"/>
<rect x="997.80" y="46.80" width="1.00" height="4.80" fill="#7c7c7c"/>
<rect x="1002.60" y="46.80" width="1.00" height="4.80" fill="#7c7c7c"/>
<rect x="1007.40" y="46.80" width="1.00" height="4.80" fill="#7c7c7c"/>
<rect x="1012.20" y="46.80" width="1.00" height="4.80" fill="#7c7c7c"/>
<rect x="1017.00" y="46.80" width="1.00" height="4.80" fill="#7c7c7c"/>
<rect x="675.00" y="14.00" width="1.00" height="37.60" fill="#8c8c8c"/>
<rect x="178.00" y="51.40" width="844.00" height="2.20" fill="#e4e400"/>
<rect x="256.20" y="51.40" width="1.00" height="2.20" fill="#f02818"/>
<rect x="258.00" y="51.40" width="1.00" height="2.20" fill="#f02818"/>
<rect x="291.10" y="51.40" width="5.10" height="2.20" fill="#f02818"/>
<rect x="303.40" y="51.40" width="5.20" height="2.20" fill="#f02818"/>
<rect x="363.00" y="51.40" width="5.40" height="2.20" fill="#f02818"/>
<rect x="381.80" y="51.40" width="5.40" height="2.20" fill="#f02818"/>
<rect x="426.60" y="51.40" width="4.80" height="2.20" fill="#f02818"/>
<clipPath id="rc"><rect x="178" y="0" width="844" height="60"/></clipPath><g clip-path="url(#rc)">
<text x="153.50" y="38.6" font-family="Liberation Sans, sans-serif" font-size="10.2" fill="#b8b8b8" textLength="50.2" lengthAdjust="spacingAndGlyphs">00:00:00:00</text>
<text x="225.50" y="38.6" font-family="Liberation Sans, sans-serif" font-size="10.2" fill="#b8b8b8" textLength="50.2" lengthAdjust="spacingAndGlyphs">00:00:29:23</text>
<text x="297.50" y="38.6" font-family="Liberation Sans, sans-serif" font-size="10.2" fill="#b8b8b8" textLength="50.2" lengthAdjust="spacingAndGlyphs">00:00:59:22</text>
<text x="369.50" y="38.6" font-family="Liberation Sans, sans-serif" font-size="10.2" fill="#b8b8b8" textLength="50.2" lengthAdjust="spacingAndGlyphs">00:01:29:21</text>
<text x="441.50" y="38.6" font-family="Liberation Sans, sans-serif" font-size="10.2" fill="#b8b8b8" textLength="50.2" lengthAdjust="spacingAndGlyphs">00:01:59:21</text>
<text x="513.50" y="38.6" font-family="Liberation Sans, sans-serif" font-size="10.2" fill="#b8b8b8" textLength="50.2" lengthAdjust="spacingAndGlyphs">00:02:29:20</text>
<text x="585.50" y="38.6" font-family="Liberation Sans, sans-serif" font-size="10.2" fill="#b8b8b8" textLength="50.2" lengthAdjust="spacingAndGlyphs">00:02:59:19</text>
<text x="657.50" y="38.6" font-family="Liberation Sans, sans-serif" font-size="10.2" fill="#b8b8b8" textLength="50.2" lengthAdjust="spacingAndGlyphs">00:03:29:18</text>
<text x="729.50" y="38.6" font-family="Liberation Sans, sans-serif" font-size="10.2" fill="#b8b8b8" textLength="50.2" lengthAdjust="spacingAndGlyphs">00:03:59:18</text>
<text x="801.50" y="38.6" font-family="Liberation Sans, sans-serif" font-size="10.2" fill="#b8b8b8" textLength="50.2" lengthAdjust="spacingAndGlyphs">00:04:29:17</text>
<text x="873.50" y="38.6" font-family="Liberation Sans, sans-serif" font-size="10.2" fill="#b8b8b8" textLength="50.2" lengthAdjust="spacingAndGlyphs">00:04:59:16</text>
<text x="945.50" y="38.6" font-family="Liberation Sans, sans-serif" font-size="10.2" fill="#b8b8b8" textLength="50.2" lengthAdjust="spacingAndGlyphs">00:05:29:16</text>
<text x="1017.50" y="38.6" font-family="Liberation Sans, sans-serif" font-size="10.2" fill="#b8b8b8" textLength="50.2" lengthAdjust="spacingAndGlyphs">00:05:59:15</text>
</g>
<rect x="554.55" y="50.00" width="1.30" height="408.00" fill="#3a84d8"/>
<path d="M550 41.6 h10.4 v6.6 l-4.4 4.2 h-1.6 l-4.4 -4.2z" fill="#3d8fe8"/>
</svg>
<div class="tc">00:02:37:01</div>
<div class="btn" style="left:7px"><svg width="21" height="21" viewBox="0 0 21 21"><g fill="#cfcfcf"><rect x="10" y="5" width="1.3" height="11"/><circle cx="10.6" cy="4.8" r="1.4"/><rect x="6.5" y="8.3" width="3" height="1.6"/><rect x="3.9" y="10.6" width="5.6" height="1.6"/><rect x="6.8" y="13.4" width="2.7" height="1.6"/><rect x="11.8" y="8.3" width="4.2" height="1.6"/><rect x="11.8" y="10.9" width="2.2" height="1.6"/><rect x="11.8" y="13.4" width="5" height="1.6"/></g></svg></div>
<div class="btn" style="left:35px"><svg width="21" height="21" viewBox="0 0 21 21"><path d="M7.2 15.4 V10.6 a3.4 3.4 0 0 1 6.8 0 V15.4" fill="none" stroke="#d0d0d0" stroke-width="2.4"/><rect x="6" y="13.6" width="2.4" height="1.9" fill="#8a8a8a"/><rect x="12.8" y="13.6" width="2.4" height="1.9" fill="#8a8a8a"/></svg></div>
<div class="btn" style="left:64px"><svg width="21" height="21" viewBox="0 0 21 21"><rect x="4.2" y="5.2" width="3.8" height="4.8" fill="#bdbdbd"/><rect x="8.9" y="5.2" width="7.8" height="4.8" fill="#bdbdbd"/><rect x="4.7" y="12" width="3.4" height="2.8" fill="none" stroke="#cfcfcf" stroke-width="1"/><path d="M8.9 4.9 L8.9 16.8 L12 13.6 L17.2 13.4z" fill="#d6d6d6" stroke="#3a3a3a" stroke-width="0.9"/></svg></div>
<svg class="ab" style="left:99px;top:31px" width="8" height="10" viewBox="0 0 8 10"><path d="M0.6 0.6 h6.8 v5 L4 9.4 L0.6 5.6z" fill="#b2b2b2"/></svg>
<svg class="ab" style="left:124px;top:28px" width="15" height="15" viewBox="0 0 15 15"><path d="M12.2 13.6 L6.2 7.2" stroke="#bcbcbc" stroke-width="2.8" stroke-linecap="round"/><path d="M1.2 3.4 a3.4 3.4 0 0 0 5.6 3.2 a3.4 3.4 0 0 0 0.2 -4.8 a3.4 3.4 0 0 0 -2.6 -1 l1.6 2.4 l-1.6 1.8 l-2.4 -0.4z" fill="#bcbcbc"/></svg>
<div class="cc">CC</div>
<div class="tb" style="top:75.2px;height:34.8px;line-height:35.8px">V7</div>
<svg class="ab" style="left:34px;top:86.3px" width="11" height="12" viewBox="0 0 11 12"><path d="M2.2 5.4 V3.4 a2.4 2.4 0 0 1 4.6 -0.9" fill="none" stroke="#b4b4b4" stroke-width="1.2"/><rect x="0.8" y="5.2" width="8.6" height="6.2" rx="0.8" fill="#b4b4b4"/><rect x="4.4" y="7" width="1.5" height="3" fill="#1e1e1e"/></svg>
<svg class="ab" style="left:75.5px;top:88.1px" width="13" height="9" viewBox="0 0 13 9"><rect x="0.9" y="0.9" width="7.4" height="2.5" fill="none" stroke="#b4b4b4" stroke-width="1.1"/><rect x="0.9" y="5.3" width="7.4" height="2.5" fill="none" stroke="#b4b4b4" stroke-width="1.1"/><path d="M8.6 2.1 h2.1 v4.6 h-2.1" fill="none" stroke="#b4b4b4" stroke-width="1.7"/></svg>
<svg class="ab" style="left:96px;top:88.7px" width="13" height="9" viewBox="0 0 13 9"><path d="M0.6 4.5 Q6.5 -2.2 12.4 4.5 Q6.5 11.2 0.6 4.5z" fill="#d8d8d8"/><circle cx="6.5" cy="4.5" r="2.5" fill="#1e1e1e"/><circle cx="7.4" cy="3.6" r="0.8" fill="#d8d8d8"/></svg>
<div class="tb" style="top:111.6px;height:35.0px;line-height:36.0px">V6</div>
<svg class="ab" style="left:34px;top:122.8px" width="11" height="12" viewBox="0 0 11 12"><path d="M2.2 5.4 V3.4 a2.4 2.4 0 0 1 4.6 -0.9" fill="none" stroke="#b4b4b4" stroke-width="1.2"/><rect x="0.8" y="5.2" width="8.6" height="6.2" rx="0.8" fill="#b4b4b4"/><rect x="4.4" y="7" width="1.5" height="3" fill="#1e1e1e"/></svg>
<svg class="ab" style="left:75.5px;top:124.6px" width="13" height="9" viewBox="0 0 13 9"><rect x="0.9" y="0.9" width="7.4" height="2.5" fill="none" stroke="#b4b4b4" stroke-width="1.1"/><rect x="0.9" y="5.3" width="7.4" height="2.5" fill="none" stroke="#b4b4b4" stroke-width="1.1"/><path d="M8.6 2.1 h2.1 v4.6 h-2.1" fill="none" stroke="#b4b4b4" stroke-width="1.7"/></svg>
<svg class="ab" style="left:96px;top:125.2px" width="13" height="9" viewBox="0 0 13 9"><path d="M0.6 4.5 Q6.5 -2.2 12.4 4.5 Q6.5 11.2 0.6 4.5z" fill="#d8d8d8"/><circle cx="6.5" cy="4.5" r="2.5" fill="#1e1e1e"/><circle cx="7.4" cy="3.6" r="0.8" fill="#d8d8d8"/></svg>
<div class="tb" style="top:148.2px;height:34.6px;line-height:35.6px">V5</div>
<svg class="ab" style="left:34px;top:159.2px" width="11" height="12" viewBox="0 0 11 12"><path d="M2.2 5.4 V3.4 a2.4 2.4 0 0 1 4.6 -0.9" fill="none" stroke="#b4b4b4" stroke-width="1.2"/><rect x="0.8" y="5.2" width="8.6" height="6.2" rx="0.8" fill="#b4b4b4"/><rect x="4.4" y="7" width="1.5" height="3" fill="#1e1e1e"/></svg>
<svg class="ab" style="left:75.5px;top:161.0px" width="13" height="9" viewBox="0 0 13 9"><rect x="0.9" y="0.9" width="7.4" height="2.5" fill="none" stroke="#b4b4b4" stroke-width="1.1"/><rect x="0.9" y="5.3" width="7.4" height="2.5" fill="none" stroke="#b4b4b4" stroke-width="1.1"/><path d="M8.6 2.1 h2.1 v4.6 h-2.1" fill="none" stroke="#b4b4b4" stroke-width="1.7"/></svg>
<svg class="ab" style="left:96px;top:161.6px" width="13" height="9" viewBox="0 0 13 9"><path d="M0.6 4.5 Q6.5 -2.2 12.4 4.5 Q6.5 11.2 0.6 4.5z" fill="#d8d8d8"/><circle cx="6.5" cy="4.5" r="2.5" fill="#1e1e1e"/><circle cx="7.4" cy="3.6" r="0.8" fill="#d8d8d8"/></svg>
<div class="tb" style="top:184.6px;height:34.8px;line-height:35.8px">V4</div>
<svg class="ab" style="left:34px;top:195.7px" width="11" height="12" viewBox="0 0 11 12"><path d="M2.2 5.4 V3.4 a2.4 2.4 0 0 1 4.6 -0.9" fill="none" stroke="#b4b4b4" stroke-width="1.2"/><rect x="0.8" y="5.2" width="8.6" height="6.2" rx="0.8" fill="#b4b4b4"/><rect x="4.4" y="7" width="1.5" height="3" fill="#1e1e1e"/></svg>
<svg class="ab" style="left:75.5px;top:197.5px" width="13" height="9" viewBox="0 0 13 9"><rect x="0.9" y="0.9" width="7.4" height="2.5" fill="none" stroke="#b4b4b4" stroke-width="1.1"/><rect x="0.9" y="5.3" width="7.4" height="2.5" fill="none" stroke="#b4b4b4" stroke-width="1.1"/><path d="M8.6 2.1 h2.1 v4.6 h-2.1" fill="none" stroke="#b4b4b4" stroke-width="1.7"/></svg>
<svg class="ab" style="left:96px;top:198.1px" width="13" height="9" viewBox="0 0 13 9"><path d="M0.6 4.5 Q6.5 -2.2 12.4 4.5 Q6.5 11.2 0.6 4.5z" fill="#d8d8d8"/><circle cx="6.5" cy="4.5" r="2.5" fill="#1e1e1e"/><circle cx="7.4" cy="3.6" r="0.8" fill="#d8d8d8"/></svg>
<div class="tb" style="top:221.2px;height:34.8px;line-height:35.8px">V3</div>
<svg class="ab" style="left:34px;top:232.3px" width="11" height="12" viewBox="0 0 11 12"><path d="M2.2 5.4 V3.4 a2.4 2.4 0 0 1 4.6 -0.9" fill="none" stroke="#b4b4b4" stroke-width="1.2"/><rect x="0.8" y="5.2" width="8.6" height="6.2" rx="0.8" fill="#b4b4b4"/><rect x="4.4" y="7" width="1.5" height="3" fill="#1e1e1e"/></svg>
<svg class="ab" style="left:75.5px;top:234.1px" width="13" height="9" viewBox="0 0 13 9"><rect x="0.9" y="0.9" width="7.4" height="2.5" fill="none" stroke="#b4b4b4" stroke-width="1.1"/><rect x="0.9" y="5.3" width="7.4" height="2.5" fill="none" stroke="#b4b4b4" stroke-width="1.1"/><path d="M8.6 2.1 h2.1 v4.6 h-2.1" fill="none" stroke="#b4b4b4" stroke-width="1.7"/></svg>
<svg class="ab" style="left:96px;top:234.7px" width="13" height="9" viewBox="0 0 13 9"><path d="M0.6 4.5 Q6.5 -2.2 12.4 4.5 Q6.5 11.2 0.6 4.5z" fill="#d8d8d8"/><circle cx="6.5" cy="4.5" r="2.5" fill="#1e1e1e"/><circle cx="7.4" cy="3.6" r="0.8" fill="#d8d8d8"/></svg>
<div class="tb" style="top:257.8px;height:34.8px;line-height:35.8px">V2</div>
<svg class="ab" style="left:34px;top:268.9px" width="11" height="12" viewBox="0 0 11 12"><path d="M2.2 5.4 V3.4 a2.4 2.4 0 0 1 4.6 -0.9" fill="none" stroke="#b4b4b4" stroke-width="1.2"/><rect x="0.8" y="5.2" width="8.6" height="6.2" rx="0.8" fill="#b4b4b4"/><rect x="4.4" y="7" width="1.5" height="3" fill="#1e1e1e"/></svg>
<svg class="ab" style="left:75.5px;top:270.7px" width="13" height="9" viewBox="0 0 13 9"><rect x="0.9" y="0.9" width="7.4" height="2.5" fill="none" stroke="#b4b4b4" stroke-width="1.1"/><rect x="0.9" y="5.3" width="7.4" height="2.5" fill="none" stroke="#b4b4b4" stroke-width="1.1"/><path d="M8.6 2.1 h2.1 v4.6 h-2.1" fill="none" stroke="#b4b4b4" stroke-width="1.7"/></svg>
<svg class="ab" style="left:96px;top:271.3px" width="13" height="9" viewBox="0 0 13 9"><path d="M0.6 4.5 Q6.5 -2.2 12.4 4.5 Q6.5 11.2 0.6 4.5z" fill="#d8d8d8"/><circle cx="6.5" cy="4.5" r="2.5" fill="#1e1e1e"/><circle cx="7.4" cy="3.6" r="0.8" fill="#d8d8d8"/></svg>
<div class="tb" style="top:294.2px;height:62.2px;line-height:63.6px">V1</div>
<svg class="ab" style="left:34px;top:319.2px" width="11" height="12" viewBox="0 0 11 12"><path d="M2.2 5.4 V3.4 a2.4 2.4 0 0 1 4.6 -0.9" fill="none" stroke="#b4b4b4" stroke-width="1.2"/><rect x="0.8" y="5.2" width="8.6" height="6.2" rx="0.8" fill="#b4b4b4"/><rect x="4.4" y="7" width="1.5" height="3" fill="#1e1e1e"/></svg>
<svg class="ab" style="left:75.5px;top:310.2px" width="13" height="9" viewBox="0 0 13 9"><rect x="0.9" y="0.9" width="7.4" height="2.5" fill="none" stroke="#b4b4b4" stroke-width="1.1"/><rect x="0.9" y="5.3" width="7.4" height="2.5" fill="none" stroke="#b4b4b4" stroke-width="1.1"/><path d="M8.6 2.1 h2.1 v4.6 h-2.1" fill="none" stroke="#b4b4b4" stroke-width="1.7"/></svg>
<svg class="ab" style="left:96px;top:310.8px" width="13" height="9" viewBox="0 0 13 9"><path d="M0.6 4.5 Q6.5 -2.2 12.4 4.5 Q6.5 11.2 0.6 4.5z" fill="#d8d8d8"/><circle cx="6.5" cy="4.5" r="2.5" fill="#1e1e1e"/><circle cx="7.4" cy="3.6" r="0.8" fill="#d8d8d8"/></svg>
<div class="vn">Vídeo 1</div>
<div class="tb" style="top:348.0px;height:33.6px;line-height:34.6px;clip-path:inset(13px 0 0 0);">A3</div>
<svg class="ab" style="left:34px;top:358.5px" width="11" height="12" viewBox="0 0 11 12"><path d="M2.2 5.4 V3.4 a2.4 2.4 0 0 1 4.6 -0.9" fill="none" stroke="#b4b4b4" stroke-width="1.2"/><rect x="0.8" y="5.2" width="8.6" height="6.2" rx="0.8" fill="#b4b4b4"/><rect x="4.4" y="7" width="1.5" height="3" fill="#1e1e1e"/></svg>
<svg class="ab" style="left:75.5px;top:360.3px" width="13" height="9" viewBox="0 0 13 9"><rect x="0.9" y="0.9" width="7.4" height="2.5" fill="none" stroke="#b4b4b4" stroke-width="1.1"/><rect x="0.9" y="5.3" width="7.4" height="2.5" fill="none" stroke="#b4b4b4" stroke-width="1.1"/><path d="M8.6 2.1 h2.1 v4.6 h-2.1" fill="none" stroke="#b4b4b4" stroke-width="1.7"/></svg>
<div class="ms" style="left:99px;top:358.8px">M</div>
<div class="ms" style="left:120.6px;top:358.8px">S</div>
<svg class="ab" style="left:140.5px;top:359.2px" width="10" height="12" viewBox="0 0 10 12"><rect x="2.5" y="0.2" width="5" height="7.8" rx="2.5" fill="#808080"/><path d="M1.0 5.4 a4 4 0 0 0 8 0 M5 9.4 v1.8 M2.6 11.4 h4.8" fill="none" stroke="#808080" stroke-width="0.9"/></svg>
<div class="tb" style="top:383.8px;height:34.8px;line-height:35.8px;">A4</div>
<svg class="ab" style="left:34px;top:394.9px" width="11" height="12" viewBox="0 0 11 12"><path d="M2.2 5.4 V3.4 a2.4 2.4 0 0 1 4.6 -0.9" fill="none" stroke="#b4b4b4" stroke-width="1.2"/><rect x="0.8" y="5.2" width="8.6" height="6.2" rx="0.8" fill="#b4b4b4"/><rect x="4.4" y="7" width="1.5" height="3" fill="#1e1e1e"/></svg>
<svg class="ab" style="left:75.5px;top:396.7px" width="13" height="9" viewBox="0 0 13 9"><rect x="0.9" y="0.9" width="7.4" height="2.5" fill="none" stroke="#b4b4b4" stroke-width="1.1"/><rect x="0.9" y="5.3" width="7.4" height="2.5" fill="none" stroke="#b4b4b4" stroke-width="1.1"/><path d="M8.6 2.1 h2.1 v4.6 h-2.1" fill="none" stroke="#b4b4b4" stroke-width="1.7"/></svg>
<div class="ms" style="left:99px;top:395.2px">M</div>
<div class="ms" style="left:120.6px;top:395.2px">S</div>
<svg class="ab" style="left:140.5px;top:395.6px" width="10" height="12" viewBox="0 0 10 12"><rect x="2.5" y="0.2" width="5" height="7.8" rx="2.5" fill="#808080"/><path d="M1.0 5.4 a4 4 0 0 0 8 0 M5 9.4 v1.8 M2.6 11.4 h4.8" fill="none" stroke="#808080" stroke-width="0.9"/></svg>
<div class="tb nb" style="top:420.4px;height:34.6px;line-height:35.6px;">A5</div>
<svg class="ab" style="left:34px;top:431.4px" width="11" height="12" viewBox="0 0 11 12"><path d="M2.2 5.4 V3.4 a2.4 2.4 0 0 1 4.6 -0.9" fill="none" stroke="#b4b4b4" stroke-width="1.2"/><rect x="0.8" y="5.2" width="8.6" height="6.2" rx="0.8" fill="#b4b4b4"/><rect x="4.4" y="7" width="1.5" height="3" fill="#1e1e1e"/></svg>
<svg class="ab" style="left:75.5px;top:433.2px" width="13" height="9" viewBox="0 0 13 9"><rect x="0.9" y="0.9" width="7.4" height="2.5" fill="none" stroke="#b4b4b4" stroke-width="1.1"/><rect x="0.9" y="5.3" width="7.4" height="2.5" fill="none" stroke="#b4b4b4" stroke-width="1.1"/><path d="M8.6 2.1 h2.1 v4.6 h-2.1" fill="none" stroke="#b4b4b4" stroke-width="1.7"/></svg>
<div class="ms" style="left:99px;top:431.7px">M</div>
<div class="ms" style="left:120.6px;top:431.7px">S</div>
<svg class="ab" style="left:140.5px;top:432.1px" width="10" height="12" viewBox="0 0 10 12"><rect x="2.5" y="0.2" width="5" height="7.8" rx="2.5" fill="#808080"/><path d="M1.0 5.4 a4 4 0 0 0 8 0 M5 9.4 v1.8 M2.6 11.4 h4.8" fill="none" stroke="#808080" stroke-width="0.9"/></svg>
<div id="cover"></div>
</div>
</body></html>
